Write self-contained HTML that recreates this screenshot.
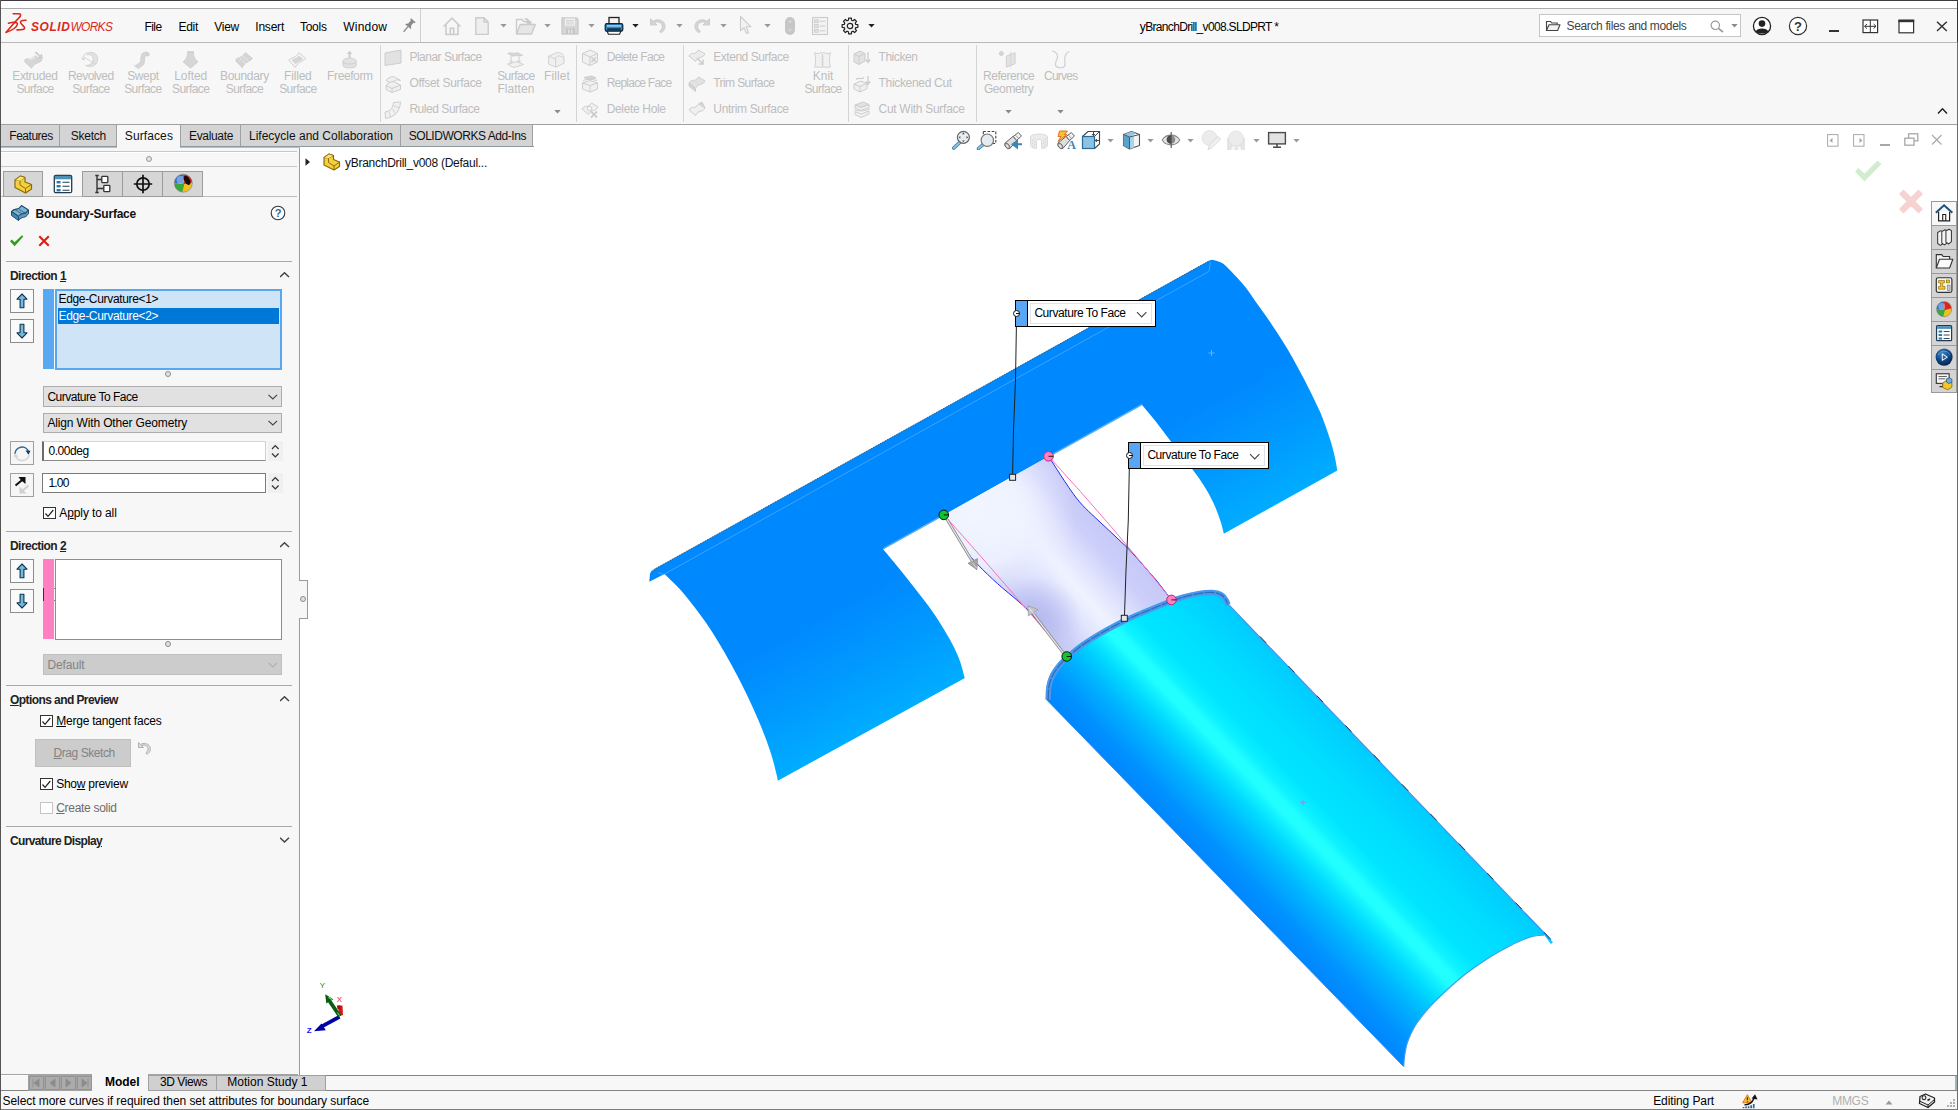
<!DOCTYPE html>
<html><head><meta charset="utf-8"><title>SOLIDWORKS</title>
<style>
html,body{margin:0;padding:0;}
body{width:1958px;height:1110px;position:relative;overflow:hidden;background:#fff;font-family:"Liberation Sans",sans-serif;font-size:12px;}
div,span.t,svg{position:absolute;}
span.t{white-space:nowrap;}
u{text-decoration:underline;text-underline-offset:1px;}
</style></head><body>
<div style="left:0px;top:0px;width:1958px;height:1110px;background:#fff;"></div>
<div style="left:0px;top:9px;width:1958px;height:33px;background:#f7f7f7;"></div>
<div style="left:0px;top:8px;width:1958px;height:1px;background:#ababab;"></div>
<div style="left:0px;top:42px;width:1958px;height:1px;background:#b9b9b9;"></div>
<div style="left:0px;top:43px;width:1958px;height:81px;background:#f7f7f7;"></div>
<div style="left:0px;top:124px;width:1958px;height:1px;background:#a0a0a0;"></div>
<span class="t" style="left:144.4px;top:18.6px;height:16px;line-height:16px;font-size:12px;color:#000;letter-spacing:-0.511px;">File</span>
<span class="t" style="left:178.4px;top:18.6px;height:16px;line-height:16px;font-size:12px;color:#000;letter-spacing:-0.268px;">Edit</span>
<span class="t" style="left:214.2px;top:18.6px;height:16px;line-height:16px;font-size:12px;color:#000;letter-spacing:-0.249px;">View</span>
<span class="t" style="left:255.3px;top:18.6px;height:16px;line-height:16px;font-size:12px;color:#000;letter-spacing:-0.217px;">Insert</span>
<span class="t" style="left:300.0px;top:18.6px;height:16px;line-height:16px;font-size:12px;color:#000;letter-spacing:-0.283px;">Tools</span>
<span class="t" style="left:343.3px;top:18.6px;height:16px;line-height:16px;font-size:12px;color:#000;letter-spacing:0.185px;">Window</span>
<div style="left:420px;top:9px;width:1px;height:33px;background:#d0d0d0;"></div>
<span class="t" style="left:1139.8px;top:18.6px;height:16px;line-height:16px;font-size:12px;color:#000;letter-spacing:-0.662px;">yBranchDrill_v008.SLDPRT *</span>
<span class="t" id="logo" style="left:31px;top:17.5px;height:18px;line-height:18px;font-size:12.5px;color:#da291c;font-style:italic;transform-origin:0 50%;transform:scaleX(0.953)"><b style="letter-spacing:0.65px">SOLID</b><span style="letter-spacing:-0.7px">WORKS</span></span>
<div style="left:1539px;top:14px;width:202px;height:23px;background:#fff;border:1px solid #c6c6c6;box-sizing:border-box;"></div>
<span class="t" style="left:1566.5px;top:18.1px;height:16px;line-height:16px;font-size:12px;color:#444;letter-spacing:-0.354px;">Search files and models</span>
<span class="t" style="left:12.2px;top:68.1px;height:16px;line-height:16px;font-size:12px;color:#bdbdbd;letter-spacing:-0.314px;">Extruded</span>
<span class="t" style="left:16.4px;top:81.4px;height:16px;line-height:16px;font-size:12px;color:#bdbdbd;letter-spacing:-0.578px;">Surface</span>
<span class="t" style="left:68.0px;top:68.1px;height:16px;line-height:16px;font-size:12px;color:#bdbdbd;letter-spacing:-0.566px;">Revolved</span>
<span class="t" style="left:72.2px;top:81.4px;height:16px;line-height:16px;font-size:12px;color:#bdbdbd;letter-spacing:-0.578px;">Surface</span>
<span class="t" style="left:127.2px;top:68.1px;height:16px;line-height:16px;font-size:12px;color:#bdbdbd;letter-spacing:-0.369px;">Swept</span>
<span class="t" style="left:124.2px;top:81.4px;height:16px;line-height:16px;font-size:12px;color:#bdbdbd;letter-spacing:-0.578px;">Surface</span>
<span class="t" style="left:174.2px;top:68.1px;height:16px;line-height:16px;font-size:12px;color:#bdbdbd;letter-spacing:-0.057px;">Lofted</span>
<span class="t" style="left:172.0px;top:81.4px;height:16px;line-height:16px;font-size:12px;color:#bdbdbd;letter-spacing:-0.578px;">Surface</span>
<span class="t" style="left:220.0px;top:68.1px;height:16px;line-height:16px;font-size:12px;color:#bdbdbd;letter-spacing:-0.295px;">Boundary</span>
<span class="t" style="left:225.8px;top:81.4px;height:16px;line-height:16px;font-size:12px;color:#bdbdbd;letter-spacing:-0.578px;">Surface</span>
<span class="t" style="left:284.1px;top:68.1px;height:16px;line-height:16px;font-size:12px;color:#bdbdbd;letter-spacing:-0.198px;">Filled</span>
<span class="t" style="left:279.2px;top:81.4px;height:16px;line-height:16px;font-size:12px;color:#bdbdbd;letter-spacing:-0.578px;">Surface</span>
<span class="t" style="left:327.1px;top:68.1px;height:16px;line-height:16px;font-size:12px;color:#bdbdbd;letter-spacing:-0.396px;">Freeform</span>
<span class="t" style="left:497.2px;top:68.1px;height:16px;line-height:16px;font-size:12px;color:#bdbdbd;letter-spacing:-0.578px;">Surface</span>
<span class="t" style="left:497.4px;top:81.4px;height:16px;line-height:16px;font-size:12px;color:#bdbdbd;letter-spacing:0.047px;">Flatten</span>
<span class="t" style="left:544.0px;top:68.1px;height:16px;line-height:16px;font-size:12px;color:#bdbdbd;letter-spacing:0.109px;">Fillet</span>
<span class="t" style="left:812.8px;top:68.1px;height:16px;line-height:16px;font-size:12px;color:#bdbdbd;letter-spacing:-0.043px;">Knit</span>
<span class="t" style="left:804.4px;top:81.4px;height:16px;line-height:16px;font-size:12px;color:#bdbdbd;letter-spacing:-0.578px;">Surface</span>
<span class="t" style="left:983.1px;top:68.1px;height:16px;line-height:16px;font-size:12px;color:#bdbdbd;letter-spacing:-0.484px;">Reference</span>
<span class="t" style="left:983.9px;top:81.4px;height:16px;line-height:16px;font-size:12px;color:#bdbdbd;letter-spacing:-0.396px;">Geometry</span>
<span class="t" style="left:1044.0px;top:68.1px;height:16px;line-height:16px;font-size:12px;color:#bdbdbd;letter-spacing:-0.753px;">Curves</span>
<span class="t" style="left:409.4px;top:49.1px;height:16px;line-height:16px;font-size:12px;color:#bdbdbd;letter-spacing:-0.504px;">Planar Surface</span>
<span class="t" style="left:409.4px;top:75.1px;height:16px;line-height:16px;font-size:12px;color:#bdbdbd;letter-spacing:-0.296px;">Offset Surface</span>
<span class="t" style="left:409.4px;top:101.1px;height:16px;line-height:16px;font-size:12px;color:#bdbdbd;letter-spacing:-0.456px;">Ruled Surface</span>
<span class="t" style="left:606.7px;top:49.1px;height:16px;line-height:16px;font-size:12px;color:#bdbdbd;letter-spacing:-0.644px;">Delete Face</span>
<span class="t" style="left:606.7px;top:75.1px;height:16px;line-height:16px;font-size:12px;color:#bdbdbd;letter-spacing:-0.778px;">Replace Face</span>
<span class="t" style="left:606.7px;top:101.1px;height:16px;line-height:16px;font-size:12px;color:#bdbdbd;letter-spacing:-0.337px;">Delete Hole</span>
<span class="t" style="left:713.3px;top:49.1px;height:16px;line-height:16px;font-size:12px;color:#bdbdbd;letter-spacing:-0.473px;">Extend Surface</span>
<span class="t" style="left:713.3px;top:75.1px;height:16px;line-height:16px;font-size:12px;color:#bdbdbd;letter-spacing:-0.595px;">Trim Surface</span>
<span class="t" style="left:713.3px;top:101.1px;height:16px;line-height:16px;font-size:12px;color:#bdbdbd;letter-spacing:-0.330px;">Untrim Surface</span>
<span class="t" style="left:878.5px;top:49.1px;height:16px;line-height:16px;font-size:12px;color:#bdbdbd;letter-spacing:-0.445px;">Thicken</span>
<span class="t" style="left:878.5px;top:75.1px;height:16px;line-height:16px;font-size:12px;color:#bdbdbd;letter-spacing:-0.312px;">Thickened Cut</span>
<span class="t" style="left:878.5px;top:101.1px;height:16px;line-height:16px;font-size:12px;color:#bdbdbd;letter-spacing:-0.286px;">Cut With Surface</span>
<div style="left:379.5px;top:45px;width:1px;height:77px;background:#d4d4d4;"></div>
<div style="left:576.3px;top:45px;width:1px;height:77px;background:#d4d4d4;"></div>
<div style="left:683.4px;top:45px;width:1px;height:77px;background:#d4d4d4;"></div>
<div style="left:848.4px;top:45px;width:1px;height:77px;background:#d4d4d4;"></div>
<div style="left:976.4px;top:45px;width:1px;height:77px;background:#d4d4d4;"></div>
<div style="left:0px;top:125px;width:533px;height:22px;background:#d4d4d4;"></div>
<div style="left:0px;top:124px;width:60px;height:23px;background:#d4d4d4;border:1px solid #a0a0a0;box-sizing:border-box;"></div>
<div style="left:59px;top:124px;width:58px;height:23px;background:#d4d4d4;border:1px solid #a0a0a0;box-sizing:border-box;"></div>
<div style="left:180px;top:124px;width:61px;height:23px;background:#d4d4d4;border:1px solid #a0a0a0;box-sizing:border-box;"></div>
<div style="left:240px;top:124px;width:161px;height:23px;background:#d4d4d4;border:1px solid #a0a0a0;box-sizing:border-box;"></div>
<div style="left:400px;top:124px;width:133px;height:23px;background:#d4d4d4;border:1px solid #a0a0a0;box-sizing:border-box;"></div>
<div style="left:0px;top:146px;width:534px;height:1px;background:#8c9aa0;"></div>
<div style="left:0px;top:147px;width:300px;height:1px;background:#b4c0c4;"></div>
<div style="left:117px;top:125px;width:63px;height:23px;background:#f7f7f7;"></div>
<span class="t" style="left:9.3px;top:128.1px;height:16px;line-height:16px;font-size:12px;color:#111;letter-spacing:-0.480px;">Features</span>
<span class="t" style="left:70.8px;top:128.1px;height:16px;line-height:16px;font-size:12px;color:#111;letter-spacing:-0.245px;">Sketch</span>
<span class="t" style="left:124.8px;top:128.1px;height:16px;line-height:16px;font-size:12px;color:#111;letter-spacing:0.107px;">Surfaces</span>
<span class="t" style="left:189.0px;top:128.1px;height:16px;line-height:16px;font-size:12px;color:#111;letter-spacing:-0.336px;">Evaluate</span>
<span class="t" style="left:249.0px;top:128.1px;height:16px;line-height:16px;font-size:12px;color:#111;letter-spacing:-0.003px;">Lifecycle and Collaboration</span>
<span class="t" style="left:408.7px;top:128.1px;height:16px;line-height:16px;font-size:12px;color:#111;letter-spacing:-0.447px;">SOLIDWORKS Add-Ins</span>
<div style="left:0px;top:148px;width:300px;height:926px;background:#f7f7f7;"></div>
<div style="left:299px;top:148px;width:1px;height:927px;background:#9a9a9a;"></div>
<div style="left:1px;top:151px;width:296px;height:1px;background:#c8c8c8;"></div>
<div style="left:1px;top:152px;width:296px;height:1px;background:#fff;"></div>
<div style="left:1px;top:166px;width:296px;height:1px;background:#c8c8c8;"></div>
<div style="left:145.7px;top:155.8px;width:6px;height:6px;border-radius:50%;border:1px solid #999;background:#e4e4e4;box-sizing:border-box"></div>
<div style="left:1px;top:196px;width:296px;height:1px;background:#bdbdbd;"></div>
<div style="left:3px;top:171px;width:40.0px;height:26px;background:#d6d6d6;border:1px solid #9c9c9c;box-sizing:border-box;"></div>
<div style="left:82.4px;top:171px;width:40.8px;height:26px;background:#d6d6d6;border:1px solid #9c9c9c;box-sizing:border-box;"></div>
<div style="left:122.2px;top:171px;width:40.8px;height:26px;background:#d6d6d6;border:1px solid #9c9c9c;box-sizing:border-box;"></div>
<div style="left:162px;top:171px;width:40.80000000000001px;height:26px;background:#d6d6d6;border:1px solid #9c9c9c;box-sizing:border-box;"></div>
<span class="t" style="left:35.6px;top:205.6px;height:16px;line-height:16px;font-size:12px;color:#111;letter-spacing:-0.226px;font-weight:bold;">Boundary-Surface</span>
<div style="left:6px;top:261px;width:286px;height:1px;background:#a8a8a8;"></div>
<span class="t" style="left:10.0px;top:267.6px;height:16px;line-height:16px;font-size:12px;color:#222;letter-spacing:-0.545px;font-weight:bold;">Direction <u>1</u></span>
<svg style="left:279.5px;top:272.0px" width="10" height="7"><path d="M0 5 L4.5 0.8 L9 5" fill="none" stroke="#444" stroke-width="1.5"/></svg>
<div style="left:10px;top:289px;width:24px;height:24px;background:#fafafa;border:1px solid #8c8c8c;box-sizing:border-box;"></div>
<svg style="left:15px;top:293px" width="14" height="16"><path d="M7 1 L12 6.2 H8.9 V14.8 H5.1 V6.2 H2 Z" fill="#76b9de" stroke="#0d3550" stroke-width="1.1" stroke-linejoin="round"/></svg>
<div style="left:10px;top:319px;width:24px;height:24px;background:#fafafa;border:1px solid #8c8c8c;box-sizing:border-box;"></div>
<svg style="left:15px;top:323px" width="14" height="16"><path d="M7 15 L12 9.8 H8.9 V1.2 H5.1 V9.8 H2 Z" fill="#76b9de" stroke="#0d3550" stroke-width="1.1" stroke-linejoin="round"/></svg>
<div style="left:43px;top:289px;width:11px;height:80px;background:#58a9f2;"></div>
<div style="left:55px;top:289px;width:227px;height:80.5px;background:#cfe4f7;border:2px solid #57a8ee;box-sizing:border-box;"></div>
<span class="t" style="left:58.5px;top:291.1px;height:16px;line-height:16px;font-size:12px;color:#000;letter-spacing:-0.330px;">Edge-Curvature&lt;1&gt;</span>
<div style="left:58px;top:308px;width:221px;height:15.5px;background:#0078d7;"></div>
<span class="t" style="left:58.5px;top:307.6px;height:16px;line-height:16px;font-size:12px;color:#fff;letter-spacing:-0.330px;">Edge-Curvature&lt;2&gt;</span>
<div style="left:164.7px;top:371px;width:6px;height:6px;border-radius:50%;border:1px solid #8a8a8a;background:#e2e2e2;box-sizing:border-box"></div>
<div style="left:43px;top:386px;width:239px;height:20.5px;background:#e1e1e1;border:1px solid #adadad;box-sizing:border-box;"></div>
<span class="t" style="left:47.4px;top:389.1px;height:16px;line-height:16px;font-size:12px;color:#000;letter-spacing:-0.481px;">Curvature To Face</span>
<svg style="left:268px;top:393.5px" width="10" height="7"><path d="M0.5 0.8 L4.8 5 L9.1 0.8" fill="none" stroke="#444" stroke-width="1.1"/></svg>
<div style="left:43px;top:412.6px;width:239px;height:20.5px;background:#e1e1e1;border:1px solid #adadad;box-sizing:border-box;"></div>
<span class="t" style="left:47.4px;top:415.1px;height:16px;line-height:16px;font-size:12px;color:#000;letter-spacing:-0.146px;">Align With Other Geometry</span>
<svg style="left:268px;top:420.1px" width="10" height="7"><path d="M0.5 0.8 L4.8 5 L9.1 0.8" fill="none" stroke="#444" stroke-width="1.1"/></svg>
<div style="left:10px;top:441px;width:24px;height:24px;background:#f6f6f6;border:1px solid #a0a0a0;box-sizing:border-box;"></div>
<div style="left:42px;top:441px;width:224px;height:19.5px;background:#fff;border-left:2px solid #6c6c6c;border-top:1px solid #d4d4d4;border-right:1px solid #cfcfcf;border-bottom:1px solid #8a8a8a;box-sizing:border-box;"></div>
<span class="t" style="left:48.4px;top:443.3px;height:16px;line-height:16px;font-size:12px;color:#000;letter-spacing:-0.423px;">0.00deg</span>
<div style="left:267.5px;top:441px;width:15.5px;height:19.5px;background:#f0f0f0;"></div>
<svg style="left:270.5px;top:444px" width="9" height="15"><path d="M1 5 L4.3 1.5 L7.6 5 M1 9.5 L4.3 13 L7.6 9.5" fill="none" stroke="#333" stroke-width="1.2"/></svg>
<div style="left:10px;top:473px;width:24px;height:24px;background:#f6f6f6;border:1px solid #a0a0a0;box-sizing:border-box;"></div>
<div style="left:42px;top:473px;width:224px;height:19.5px;background:#fff;border:1px solid #7a7a7a;box-sizing:border-box;"></div>
<span class="t" style="left:48.4px;top:475.3px;height:16px;line-height:16px;font-size:12px;color:#000;letter-spacing:-0.786px;">1.00</span>
<div style="left:267.5px;top:473px;width:15.5px;height:19.5px;background:#f0f0f0;"></div>
<svg style="left:270.5px;top:476px" width="9" height="15"><path d="M1 5 L4.3 1.5 L7.6 5 M1 9.5 L4.3 13 L7.6 9.5" fill="none" stroke="#333" stroke-width="1.2"/></svg>
<div style="left:43.4px;top:506.7px;width:12.5px;height:12.5px;background:#fff;border:1px solid #333;box-sizing:border-box;"></div>
<svg style="left:43.4px;top:506.7px" width="13" height="13"><path d="M2.5 6.5 L5 9.3 L10.3 3" fill="none" stroke="#222" stroke-width="1.2"/></svg>
<span class="t" style="left:59.3px;top:505.1px;height:16px;line-height:16px;font-size:12px;color:#000;letter-spacing:-0.107px;">A<u>p</u>ply to all</span>
<div style="left:6px;top:531px;width:286px;height:1px;background:#a8a8a8;"></div>
<span class="t" style="left:10.0px;top:537.6px;height:16px;line-height:16px;font-size:12px;color:#222;letter-spacing:-0.545px;font-weight:bold;">Direction <u>2</u></span>
<svg style="left:279.5px;top:542.0px" width="10" height="7"><path d="M0 5 L4.5 0.8 L9 5" fill="none" stroke="#444" stroke-width="1.5"/></svg>
<div style="left:10px;top:559px;width:24px;height:24px;background:#fafafa;border:1px solid #8c8c8c;box-sizing:border-box;"></div>
<svg style="left:15px;top:563px" width="14" height="16"><path d="M7 1 L12 6.2 H8.9 V14.8 H5.1 V6.2 H2 Z" fill="#76b9de" stroke="#0d3550" stroke-width="1.1" stroke-linejoin="round"/></svg>
<div style="left:10px;top:589px;width:24px;height:24px;background:#fafafa;border:1px solid #8c8c8c;box-sizing:border-box;"></div>
<svg style="left:15px;top:593px" width="14" height="16"><path d="M7 15 L12 9.8 H8.9 V1.2 H5.1 V9.8 H2 Z" fill="#76b9de" stroke="#0d3550" stroke-width="1.1" stroke-linejoin="round"/></svg>
<div style="left:43px;top:559px;width:11px;height:80px;background:#ff80c0;"></div>
<div style="left:55px;top:559px;width:227px;height:81px;background:#fff;border:1px solid #7f8fa9;box-sizing:border-box;"></div>
<div style="left:43px;top:588px;width:1px;height:13px;background:#333;"></div>
<div style="left:54px;top:588px;width:2px;height:1px;background:#888;"></div>
<div style="left:54px;top:600px;width:2px;height:1px;background:#888;"></div>
<div style="left:164.7px;top:641px;width:6px;height:6px;border-radius:50%;border:1px solid #8a8a8a;background:#e2e2e2;box-sizing:border-box"></div>
<div style="left:43px;top:654.2px;width:239px;height:20.5px;background:#cccccc;border:1px solid #bfbfbf;box-sizing:border-box;"></div>
<span class="t" style="left:47.4px;top:656.8px;height:16px;line-height:16px;font-size:12px;color:#838383;letter-spacing:-0.131px;">Default</span>
<svg style="left:268px;top:661.7px" width="10" height="7"><path d="M0.5 0.8 L4.8 5 L9.1 0.8" fill="none" stroke="#b0b0b0" stroke-width="1.1"/></svg>
<div style="left:6px;top:685px;width:286px;height:1px;background:#a8a8a8;"></div>
<span class="t" style="left:10.0px;top:691.6px;height:16px;line-height:16px;font-size:12px;color:#222;letter-spacing:-0.576px;font-weight:bold;"><u>O</u>ptions and Preview</span>
<svg style="left:279.5px;top:696.0px" width="10" height="7"><path d="M0 5 L4.5 0.8 L9 5" fill="none" stroke="#444" stroke-width="1.5"/></svg>
<div style="left:40.3px;top:714.5px;width:12.5px;height:12.5px;background:#fff;border:1px solid #333;box-sizing:border-box;"></div>
<svg style="left:40.3px;top:714.5px" width="13" height="13"><path d="M2.5 6.5 L5 9.3 L10.3 3" fill="none" stroke="#222" stroke-width="1.2"/></svg>
<span class="t" style="left:56.2px;top:712.9px;height:16px;line-height:16px;font-size:12px;color:#000;letter-spacing:-0.219px;"><u>M</u>erge tangent faces</span>
<div style="left:35.3px;top:738.5px;width:95.5px;height:28px;background:#cccccc;border:1px solid #c0c0c0;box-sizing:border-box;"></div>
<span class="t" style="left:53.5px;top:745.1px;height:16px;line-height:16px;font-size:12px;color:#838383;letter-spacing:-0.438px;"><u>D</u>rag Sketch</span>
<div style="left:40.3px;top:777.5px;width:12.5px;height:12.5px;background:#fff;border:1px solid #333;box-sizing:border-box;"></div>
<svg style="left:40.3px;top:777.5px" width="13" height="13"><path d="M2.5 6.5 L5 9.3 L10.3 3" fill="none" stroke="#222" stroke-width="1.2"/></svg>
<span class="t" style="left:56.2px;top:775.9px;height:16px;line-height:16px;font-size:12px;color:#000;letter-spacing:-0.259px;">Sho<u>w</u> preview</span>
<div style="left:40.3px;top:801.5px;width:12.5px;height:12.5px;background:#fff;border:1px solid #c4c4c4;box-sizing:border-box;"></div>
<span class="t" style="left:56.2px;top:799.9px;height:16px;line-height:16px;font-size:12px;color:#6d6d6d;letter-spacing:-0.294px;"><u>C</u>reate solid</span>
<div style="left:6px;top:826px;width:286px;height:1px;background:#a8a8a8;"></div>
<span class="t" style="left:10.0px;top:832.6px;height:16px;line-height:16px;font-size:12px;color:#222;letter-spacing:-0.629px;font-weight:bold;">Curvature Displa<u>y</u></span>
<svg style="left:279.5px;top:837.0px" width="10" height="7"><path d="M0 0.8 L4.5 5 L9 0.8" fill="none" stroke="#444" stroke-width="1.5"/></svg>
<div style="left:299px;top:580px;width:9px;height:39px;background:#f7f7f7;border:1px solid #9a9a9a;box-sizing:border-box;border-left:none;"></div>
<div style="left:300px;top:596px;width:6px;height:6px;border-radius:50%;border:1px solid #8a8a8a;background:#e2e2e2;box-sizing:border-box"></div>
<div style="left:0px;top:1074px;width:298px;height:1px;background:#a4a4a4;"></div>
<div style="left:300px;top:1075px;width:1658px;height:1px;background:#848484;"></div>
<div style="left:0px;top:1076px;width:1958px;height:14px;background:#f7f7f7;"></div>
<div style="left:0px;top:1090px;width:1958px;height:1px;background:#848484;"></div>
<div style="left:0px;top:1091px;width:1958px;height:19px;background:#f7f7f7;"></div>
<div style="left:0px;top:1109px;width:1958px;height:1px;background:#7c7c7c;"></div>
<div style="left:1955px;top:1076px;width:2px;height:14px;background:#9ab4b8;"></div>
<div style="left:28px;top:1075px;width:64.5px;height:16px;background:#a2a2a2;"></div>
<div style="left:29px;top:1076px;width:15px;height:14px;background:#ababab;border:1px solid #949494;box-sizing:border-box;"></div>
<div style="left:45px;top:1076px;width:15px;height:14px;background:#ababab;border:1px solid #949494;box-sizing:border-box;"></div>
<div style="left:61px;top:1076px;width:15px;height:14px;background:#ababab;border:1px solid #949494;box-sizing:border-box;"></div>
<div style="left:77px;top:1076px;width:15px;height:14px;background:#ababab;border:1px solid #949494;box-sizing:border-box;"></div>
<div style="left:92.4px;top:1074px;width:57px;height:17px;background:#f7f7f7;border-right:1px solid #a0a0a0;box-sizing:border-box"></div>
<span class="t" style="left:105.0px;top:1074.1px;height:16px;line-height:16px;font-size:12px;color:#000;letter-spacing:-0.031px;font-weight:bold;">Model</span>
<div style="left:149.4px;top:1075px;width:68px;height:16px;background:#d0d0d0;border:1px solid #a0a0a0;box-sizing:border-box;border-left:none"></div>
<span class="t" style="left:160.0px;top:1074.1px;height:16px;line-height:16px;font-size:12px;color:#000;letter-spacing:-0.434px;">3D Views</span>
<div style="left:217.4px;top:1075px;width:108.4px;height:16px;background:#d0d0d0;border:1px solid #a0a0a0;box-sizing:border-box;border-left:none"></div>
<span class="t" style="left:227.3px;top:1074.1px;height:16px;line-height:16px;font-size:12px;color:#000;letter-spacing:0.013px;">Motion Study 1</span>
<span class="t" style="left:2.5px;top:1093.1px;height:16px;line-height:16px;font-size:12px;color:#000;letter-spacing:-0.069px;">Select more curves if required then set attributes for boundary surface</span>
<span class="t" style="left:1653.2px;top:1093.1px;height:16px;line-height:16px;font-size:12px;color:#000;letter-spacing:-0.101px;">Editing Part</span>
<span class="t" style="left:1832.2px;top:1093.1px;height:16px;line-height:16px;font-size:12px;color:#b0b0b0;letter-spacing:-0.282px;">MMGS</span>
<span class="t" style="left:345.0px;top:154.6px;height:16px;line-height:16px;font-size:12px;color:#111;letter-spacing:-0.264px;">yBranchDrill_v008 (Defaul...</span>
<div style="left:0px;top:0px;width:1958px;height:1px;background:#3c3c3c;"></div>
<div style="left:0px;top:0px;width:1px;height:1110px;background:#555;"></div>
<div style="left:1957px;top:42px;width:1px;height:1068px;background:#6e6e6e;"></div>
<div style="left:1957px;top:0px;width:1px;height:42px;background:#333;"></div>
<svg style="left:0;top:0" width="1958" height="1110" viewBox="0 0 1958 1110">
<defs>
<linearGradient id="gT" gradientUnits="userSpaceOnUse" x1="932" y1="415" x2="1049" y2="627">
<stop offset="0" stop-color="#0088fe"/><stop offset="0.5" stop-color="#0088fe"/><stop offset="0.8" stop-color="#009cff"/><stop offset="1" stop-color="#00acff"/></linearGradient>
<linearGradient id="gC" gradientUnits="userSpaceOnUse" x1="1046" y1="699" x2="1186.9" y2="562">
<stop offset="0" stop-color="#0086ff"/><stop offset="0.1" stop-color="#0092ff"/><stop offset="0.24" stop-color="#00b4ff"/><stop offset="0.35" stop-color="#00d8ff"/><stop offset="0.425" stop-color="#12f2ff"/><stop offset="0.46" stop-color="#22ffff"/><stop offset="0.5" stop-color="#22ffff"/><stop offset="0.545" stop-color="#0ef2ff"/><stop offset="0.62" stop-color="#00e6ff"/><stop offset="0.8" stop-color="#00dcff"/><stop offset="1" stop-color="#00ccff"/></linearGradient>
<linearGradient id="gP" gradientUnits="userSpaceOnUse" x1="1005" y1="585" x2="1093.6" y2="508.2">
<stop offset="0" stop-color="#c6caf5"/><stop offset="0.1" stop-color="#cdd1f7"/><stop offset="0.3" stop-color="#e2e6fe"/><stop offset="0.45" stop-color="#eff3ff"/><stop offset="0.62" stop-color="#e0e3fd"/><stop offset="0.8" stop-color="#cccff9"/><stop offset="1" stop-color="#c6c8f7"/></linearGradient>
<radialGradient id="gP2" gradientUnits="userSpaceOnUse" cx="975" cy="515" r="100">
<stop offset="0" stop-color="#f2f6ff" stop-opacity="1"/><stop offset="0.5" stop-color="#eff3ff" stop-opacity="0.9"/><stop offset="1" stop-color="#e8ecff" stop-opacity="0"/></radialGradient>
<radialGradient id="gP3" gradientUnits="userSpaceOnUse" cx="1036" cy="622" r="46">
<stop offset="0" stop-color="#b2b6ec" stop-opacity="0.95"/><stop offset="0.5" stop-color="#b8bcf0" stop-opacity="0.6"/><stop offset="1" stop-color="#c0c4f4" stop-opacity="0"/></radialGradient>
</defs>
<path d="M654.1 569.3 L1209 260.8 Q1211.5 259.3 1213.5 259.9 C1215.1 260.5 1219.9 261.4 1223.3 263.8 C1226.7 266.2 1230.5 270.8 1234.1 274.6 C1237.7 278.4 1241.3 282.0 1244.9 286.5 C1248.5 291.0 1252.1 296.6 1255.7 301.7 C1259.3 306.8 1262.9 311.6 1266.5 316.8 C1270.1 322.0 1273.8 327.4 1277.4 333.0 C1281.0 338.6 1284.6 344.2 1288.2 350.3 C1291.8 356.4 1295.4 363.1 1299.0 369.8 C1302.6 376.5 1306.2 383.2 1309.8 390.4 C1313.4 397.6 1317.3 405.4 1320.6 413.1 C1323.8 420.9 1326.9 429.7 1329.3 436.9 C1331.7 444.1 1333.4 450.8 1334.7 456.4 C1336.0 462.0 1336.9 468.1 1337.3 470.4 L1223.8 533.7 C1223.3 531.9 1222.4 527.1 1220.9 522.6 C1219.5 518.1 1217.3 511.8 1215.1 506.7 C1212.9 501.6 1210.3 496.6 1207.9 492.3 C1205.5 488.0 1203.1 484.4 1200.7 480.8 C1198.3 477.2 1196.8 475.1 1193.5 470.7 C1190.2 466.3 1185.1 459.8 1181.0 454.5 C1176.9 449.2 1173.2 444.5 1169.0 439.0 C1164.8 433.5 1160.6 427.5 1156.0 421.7 C1151.4 415.9 1144.0 407.3 1141.6 404.4 L883 549.1 C885.5 552.2 893.2 561.2 898.3 567.5 C903.4 573.8 908.5 580.2 913.6 586.7 C918.7 593.2 924.3 600.2 928.9 606.6 C933.5 613.0 937.4 618.9 941.2 625.0 C945.0 631.1 948.8 637.4 951.9 643.3 C955.0 649.2 957.6 654.8 959.6 660.2 C961.6 665.6 963.3 672.5 964.1 675.5 C964.9 678.5 964.4 677.8 964.5 678.3 L777.8 780.7 C777.6 779.8 777.7 779.1 776.8 775.5 C775.9 771.9 774.3 764.9 772.6 759.0 C770.9 753.1 768.8 746.9 766.4 740.3 C764.0 733.7 761.2 726.9 758.1 719.6 C755.0 712.4 751.4 704.4 747.8 696.8 C744.2 689.2 740.2 681.2 736.4 674.0 C732.6 666.8 729.0 660.2 725.0 653.3 C721.0 646.4 717.0 639.4 712.5 632.5 C708.0 625.6 703.2 618.7 698.0 611.8 C692.8 604.9 687.1 597.4 681.5 591.1 C675.9 584.8 667.3 576.9 664.5 574.1 L649.3 581.8 L650 573.5 Q651 570.5 654.1 569.3 Z" fill="url(#gT)"/>
<path d="M658 572.6 L664 574.3 L1209 271.3 L1210.5 262" fill="none" stroke="#5ab0ff" stroke-width="0.8" opacity="0.85"/>
<path d="M654.5 569.1 L1209 260.9" fill="none" stroke="#20303c" stroke-width="1" stroke-dasharray="1 1" opacity="0.75"/>
<path d="M883.4 548.6 L943 515.4 M1049 456.4 L1141.4 404.9" fill="none" stroke="#55acff" stroke-width="1.6"/>
<path d="M944 515 L1048.6 456.4 C1053.2 463.3 1067.7 486.9 1076.4 498.0 C1085.1 509.1 1092.6 514.8 1101.0 523.0 C1109.4 531.2 1118.6 538.9 1126.8 547.2 C1135.0 555.5 1145.0 567.3 1150.0 573.0 C1155.0 578.7 1153.5 576.7 1157.1 581.2 C1160.7 585.7 1169.1 596.9 1171.5 600.0 L1171.5 598.5 C1170.4 598.9 1169.7 598.9 1165.0 600.8 C1160.3 602.6 1150.2 606.8 1143.5 609.6 C1136.8 612.4 1131.8 614.3 1124.6 617.8 C1117.4 621.3 1108.0 626.2 1100.6 630.4 C1093.2 634.6 1086.1 639.1 1080.4 643.1 C1074.7 647.1 1068.9 652.5 1066.6 654.4 C1065.3 654.8 1061.6 650.9 1058.0 646.5 C1054.4 642.1 1050.0 636.0 1045.0 630.0 C1040.0 624.0 1032.6 615.1 1028.1 610.3 C1023.6 605.5 1023.2 605.6 1018.1 601.1 C1013.0 596.6 1004.0 589.5 997.4 583.5 C990.8 577.5 983.7 570.8 978.3 565.1 C972.9 559.4 969.2 555.4 965.0 549.5 C960.8 543.6 956.5 535.8 953.0 530.0 C949.5 524.2 945.5 517.5 944.0 515.0 Z" fill="url(#gP)"/>
<path d="M944 515 L1048.6 456.4 C1053.2 463.3 1067.7 486.9 1076.4 498.0 C1085.1 509.1 1092.6 514.8 1101.0 523.0 C1109.4 531.2 1118.6 538.9 1126.8 547.2 C1135.0 555.5 1145.0 567.3 1150.0 573.0 C1155.0 578.7 1153.5 576.7 1157.1 581.2 C1160.7 585.7 1169.1 596.9 1171.5 600.0 L1171.5 598.5 C1170.4 598.9 1169.7 598.9 1165.0 600.8 C1160.3 602.6 1150.2 606.8 1143.5 609.6 C1136.8 612.4 1131.8 614.3 1124.6 617.8 C1117.4 621.3 1108.0 626.2 1100.6 630.4 C1093.2 634.6 1086.1 639.1 1080.4 643.1 C1074.7 647.1 1068.9 652.5 1066.6 654.4 C1065.3 654.8 1061.6 650.9 1058.0 646.5 C1054.4 642.1 1050.0 636.0 1045.0 630.0 C1040.0 624.0 1032.6 615.1 1028.1 610.3 C1023.6 605.5 1023.2 605.6 1018.1 601.1 C1013.0 596.6 1004.0 589.5 997.4 583.5 C990.8 577.5 983.7 570.8 978.3 565.1 C972.9 559.4 969.2 555.4 965.0 549.5 C960.8 543.6 956.5 535.8 953.0 530.0 C949.5 524.2 945.5 517.5 944.0 515.0 Z" fill="url(#gP2)"/>
<path d="M944 515 L1048.6 456.4 C1053.2 463.3 1067.7 486.9 1076.4 498.0 C1085.1 509.1 1092.6 514.8 1101.0 523.0 C1109.4 531.2 1118.6 538.9 1126.8 547.2 C1135.0 555.5 1145.0 567.3 1150.0 573.0 C1155.0 578.7 1153.5 576.7 1157.1 581.2 C1160.7 585.7 1169.1 596.9 1171.5 600.0 L1171.5 598.5 C1170.4 598.9 1169.7 598.9 1165.0 600.8 C1160.3 602.6 1150.2 606.8 1143.5 609.6 C1136.8 612.4 1131.8 614.3 1124.6 617.8 C1117.4 621.3 1108.0 626.2 1100.6 630.4 C1093.2 634.6 1086.1 639.1 1080.4 643.1 C1074.7 647.1 1068.9 652.5 1066.6 654.4 C1065.3 654.8 1061.6 650.9 1058.0 646.5 C1054.4 642.1 1050.0 636.0 1045.0 630.0 C1040.0 624.0 1032.6 615.1 1028.1 610.3 C1023.6 605.5 1023.2 605.6 1018.1 601.1 C1013.0 596.6 1004.0 589.5 997.4 583.5 C990.8 577.5 983.7 570.8 978.3 565.1 C972.9 559.4 969.2 555.4 965.0 549.5 C960.8 543.6 956.5 535.8 953.0 530.0 C949.5 524.2 945.5 517.5 944.0 515.0 Z" fill="url(#gP3)"/>
<path d="M944 515 C945.5 517.5 949.5 524.2 953.0 530.0 C956.5 535.8 960.8 543.6 965.0 549.5 C969.2 555.4 972.9 559.4 978.3 565.1 C983.7 570.8 990.8 577.5 997.4 583.5 C1004.0 589.5 1013.0 596.6 1018.1 601.1 C1023.2 605.6 1023.6 605.5 1028.1 610.3 C1032.6 615.1 1040.0 624.0 1045.0 630.0 C1050.0 636.0 1054.4 642.1 1058.0 646.5 C1061.6 650.9 1065.3 654.8 1066.8 656.4 " fill="none" stroke="#2a2ae0" stroke-width="1"/>
<path d="M1048.6 456.4 C1053.2 463.3 1067.7 486.9 1076.4 498.0 C1085.1 509.1 1092.6 514.8 1101.0 523.0 C1109.4 531.2 1118.6 538.9 1126.8 547.2 C1135.0 555.5 1145.0 567.3 1150.0 573.0 C1155.0 578.7 1153.5 576.7 1157.1 581.2 C1160.7 585.7 1169.1 596.9 1171.5 600.0 " fill="none" stroke="#2a2ae0" stroke-width="1"/>
<path d="M944 515 Q997 574 1066.8 656.4" fill="none" stroke="#ff70b8" stroke-width="1"/>
<path d="M1048.6 456.4 Q1112 525 1171.5 600" fill="none" stroke="#ff70b8" stroke-width="1"/>
<path d="M1045.8 699.2 C1046.0 696.8 1046.2 689.0 1047.0 684.7 C1047.8 680.4 1049.0 676.9 1050.8 673.3 C1052.6 669.7 1055.1 666.4 1057.7 663.2 C1060.3 660.1 1062.8 657.8 1066.6 654.4 C1070.4 651.0 1074.7 647.1 1080.4 643.1 C1086.1 639.1 1093.2 634.6 1100.6 630.4 C1108.0 626.2 1117.4 621.3 1124.6 617.8 C1131.8 614.3 1136.8 612.4 1143.5 609.6 C1150.2 606.8 1158.7 603.2 1165.0 600.8 C1171.3 598.4 1175.8 596.7 1181.3 595.1 C1186.8 593.5 1192.8 592.2 1197.7 591.4 C1202.6 590.6 1206.8 590.3 1210.4 590.5 C1214.0 590.7 1216.9 591.3 1219.2 592.6 C1221.5 593.9 1223.1 596.6 1224.2 598.3 C1225.3 600.0 1225.8 602.0 1226.1 602.7 L1553 942.2 L1550.8 944 L1544.3 935.1 C1542.1 935.4 1537.1 934.8 1531.3 936.6 C1525.5 938.4 1516.9 942.3 1509.7 945.9 C1502.5 949.5 1495.3 953.6 1488.1 958.2 C1480.9 962.8 1473.7 967.7 1466.5 973.3 C1459.3 978.9 1451.3 986.0 1444.8 992.0 C1438.3 998.0 1432.6 1003.5 1427.6 1009.3 C1422.6 1015.1 1418.0 1021.1 1414.6 1026.6 C1411.2 1032.1 1409.1 1037.5 1407.4 1042.5 C1405.7 1047.5 1405.1 1052.9 1404.5 1056.9 C1403.9 1060.9 1403.9 1065.1 1403.8 1066.7 Z" fill="url(#gC)"/>
<path d="M1048.2 699.7 C1048.3 697.5 1048.2 690.8 1048.9 686.7 C1049.7 682.6 1050.9 678.9 1052.7 675.3 C1054.5 671.7 1057.0 668.4 1059.6 665.2 C1062.2 662.1 1064.7 659.8 1068.5 656.4 C1072.3 653.0 1076.6 649.1 1082.3 645.1 C1088.0 641.1 1095.1 636.6 1102.5 632.4 C1109.9 628.2 1119.3 623.3 1126.5 619.8 C1133.7 616.3 1138.7 614.4 1145.4 611.6 C1152.1 608.8 1160.6 605.2 1166.9 602.8 C1173.2 600.4 1177.8 598.7 1183.2 597.1 C1188.7 595.5 1194.8 594.2 1199.6 593.4 C1204.5 592.6 1208.7 592.3 1212.3 592.5 C1215.9 592.7 1218.8 593.3 1221.1 594.6 C1223.4 595.9 1225.0 598.6 1226.1 600.3 C1227.2 602.0 1227.7 604.0 1228.0 604.7 " fill="none" stroke="#4b98ee" stroke-width="5.4"/>
<path d="M1048.2 699.7 C1048.3 697.5 1048.2 690.8 1048.9 686.7 C1049.7 682.6 1050.9 678.9 1052.7 675.3 C1054.5 671.7 1057.0 668.4 1059.6 665.2 C1062.2 662.1 1064.7 659.8 1068.5 656.4 C1072.3 653.0 1076.6 649.1 1082.3 645.1 C1088.0 641.1 1095.1 636.6 1102.5 632.4 C1109.9 628.2 1119.3 623.3 1126.5 619.8 C1133.7 616.3 1138.7 614.4 1145.4 611.6 C1152.1 608.8 1160.6 605.2 1166.9 602.8 C1173.2 600.4 1177.8 598.7 1183.2 597.1 C1188.7 595.5 1194.8 594.2 1199.6 593.4 C1204.5 592.6 1208.7 592.3 1212.3 592.5 C1215.9 592.7 1218.8 593.3 1221.1 594.6 C1223.4 595.9 1225.0 598.6 1226.1 600.3 C1227.2 602.0 1227.7 604.0 1228.0 604.7 " fill="none" stroke="#2f6eb6" stroke-width="1.3" stroke-dasharray="10 1.2"/>
<path d="M1227 603 L1551 940" fill="none" stroke="#3a8ee8" stroke-width="1.2"/>
<path d="M1260 636.5 L1551.5 940" fill="none" stroke="#0a2030" stroke-width="1" stroke-dasharray="9 32" opacity="0.8"/>
<path d="M1544.3 935.1 C1542.1 935.4 1537.1 934.8 1531.3 936.6 C1525.5 938.4 1516.9 942.3 1509.7 945.9 C1502.5 949.5 1495.3 953.6 1488.1 958.2 C1480.9 962.8 1473.7 967.7 1466.5 973.3 C1459.3 978.9 1451.3 986.0 1444.8 992.0 C1438.3 998.0 1432.6 1003.5 1427.6 1009.3 C1422.6 1015.1 1418.0 1021.1 1414.6 1026.6 C1411.2 1032.1 1409.1 1037.5 1407.4 1042.5 C1405.7 1047.5 1405.1 1052.9 1404.5 1056.9 C1403.9 1060.9 1403.9 1065.1 1403.8 1066.7 " fill="none" stroke="#3d9cf2" stroke-width="1.1"/>
<path d="M1047 700 L1403 1066" fill="none" stroke="#2a90f0" stroke-width="1"/>
<!-- arrows -->
<g>
<path d="M946.9 519.2 L971.8 560.5" stroke="#8e8e8e" stroke-width="2.8"/><path d="M946.9 519.2 L971.8 560.5" stroke="#ececec" stroke-width="1.1"/>
<path d="M976.9 569.7 L968 563.2 L977.6 558.6 Z" fill="#a4a4a4" stroke="#8a8a8a" stroke-width="0.7" stroke-linejoin="round"/>
<path d="M976.5 568 L972 562.5" stroke="#d8d8d8" stroke-width="1"/>
<path d="M1063.6 653.4 L1033.8 614.3" stroke="#8e8e8e" stroke-width="2.8"/><path d="M1063.6 653.4 L1033.8 614.3" stroke="#ececec" stroke-width="1.1"/>
<path d="M1027.9 605.6 L1038.2 609.6 L1028.3 616 Z" fill="#c4c4c4" stroke="#9a9a9a" stroke-width="0.7" stroke-linejoin="round"/>
<path d="M1029 608 L1033.5 613.5" stroke="#eeeeee" stroke-width="1"/>
</g>
<!-- leader lines -->
<path d="M1016.4 326 L1015.5 380 L1013.5 430 L1012.6 474" fill="none" stroke="#222" stroke-width="1"/>
<path d="M1129.3 468.5 L1128.3 520 L1126 570 L1124.5 615" fill="none" stroke="#222" stroke-width="1"/>
<rect x="1009.6" y="474.3" width="6" height="6" fill="#e6e6e6" stroke="#222" stroke-width="1"/>
<rect x="1121.3" y="615.3" width="6" height="6" fill="#e6e6e6" stroke="#222" stroke-width="1"/>
<!-- dots -->
<g stroke="#111" stroke-width="1">
<circle cx="943.8" cy="514.9" r="4.8" fill="#12c430"/><path d="M943.8 514.9 h5" />
<circle cx="1066.7" cy="656.5" r="4.8" fill="#12c430"/><path d="M1066.7 656.5 h5"/>
</g>
<g stroke="#c02878" stroke-width="1">
<circle cx="1048.5" cy="456.3" r="4.8" fill="#ff80c0"/><path d="M1048.5 456.3 h5" stroke="#222"/>
<circle cx="1171.5" cy="599.9" r="4.8" fill="#ff80c0"/><path d="M1171.5 599.9 h5" stroke="#222"/>
</g>
<!-- plus marks -->
<path d="M1208.5 353 h6 M1211.5 350 v6" stroke="#5fb0ff" stroke-width="1" fill="none"/>
<path d="M1300 802.5 h6 M1303 799.5 v6" stroke="#6aa0f0" stroke-width="1" fill="none"/>
</svg>
<div style="left:1015px;top:300px;width:141px;height:27px;background:#fff;border:1px solid #000;box-sizing:border-box"></div>
<div style="left:1016px;top:301px;width:11px;height:25px;background:#58a6f4;border-right:1px solid #000"></div>
<div style="left:1030px;top:303px;width:122px;height:21px;background:#fff;border:1px solid #e2e2e2;box-sizing:border-box"></div>
<span class="t" style="left:1034.4px;top:305.3px;height:16px;line-height:16px;font-size:12px;color:#000;letter-spacing:-0.433px;">Curvature To Face</span>
<svg style="left:1136px;top:310.5px" width="12" height="8"><path d="M1 1.2 L5.7 6 L10.4 1.2" fill="none" stroke="#444" stroke-width="1.1"/></svg>
<div style="left:1013px;top:309.5px;width:7px;height:7px;border-radius:50%;border:1px solid #111;background:#fff;box-sizing:border-box"></div>
<div style="left:1016px;top:312.5px;width:4px;height:1px;background:#111"></div>
<div style="left:1128px;top:442px;width:141px;height:27px;background:#fff;border:1px solid #000;box-sizing:border-box"></div>
<div style="left:1129px;top:443px;width:11px;height:25px;background:#58a6f4;border-right:1px solid #000"></div>
<div style="left:1143px;top:445px;width:122px;height:21px;background:#fff;border:1px solid #e2e2e2;box-sizing:border-box"></div>
<span class="t" style="left:1147.4px;top:447.3px;height:16px;line-height:16px;font-size:12px;color:#000;letter-spacing:-0.433px;">Curvature To Face</span>
<svg style="left:1249px;top:452.5px" width="12" height="8"><path d="M1 1.2 L5.7 6 L10.4 1.2" fill="none" stroke="#444" stroke-width="1.1"/></svg>
<div style="left:1126px;top:451.5px;width:7px;height:7px;border-radius:50%;border:1px solid #111;background:#fff;box-sizing:border-box"></div>
<div style="left:1129px;top:454.5px;width:4px;height:1px;background:#111"></div>
<svg style="left:5px;top:12px;" width="24" height="24" viewBox="0 0 24 24"><g fill="none" stroke="#da291c" stroke-width="1.600" stroke-linecap="round" stroke-linejoin="round"><path d="M8.200 1.800 H14 C16.300 1.800 15.800 4 14.400 5.400 L9.500 10.500 L1.200 20.300"/><path d="M3.500 11.300 C8 10 13 9.600 12.300 12.600 C11.500 15.600 6 18.600 1.200 20.300"/><path d="M21 8.200 C18 8.400 15.500 8.300 15.500 10 C15.500 12.500 20 14.300 19.600 16.300 C19.200 18 15 17.900 12 17.900"/></g></svg>
<svg style="left:400px;top:17px;" width="17" height="18" viewBox="0 0 17 18"><g transform="rotate(40 8.5 9)"><path d="M5.5 1.5 H11.5 V3 H10.3 V7.2 L12.6 9.8 H4.4 L6.7 7.2 V3 H5.5 Z" fill="#8a8a8a"/><path d="M8.5 9.8 V16.5" stroke="#8a8a8a" stroke-width="1.3"/></g></svg>
<svg style="left:442px;top:16px;" width="20" height="20" viewBox="0 0 20 20"><path d="M1.5 10.5 L10 2.2 L18.5 10.5 M4 8.6 V18.5 H16 V8.6 M8.3 18.5 V12.3 H11.7 V18.5" fill="none" stroke="#cbcbcb" stroke-width="1.6"/></svg>
<svg style="left:474px;top:16px;" width="16" height="20" viewBox="0 0 16 20"><path d="M1.8 1.8 H10 L14.2 6 V18.4 H1.8 Z M10 1.8 V6 H14.2" fill="#efefef" stroke="#cbcbcb" stroke-width="1.4" stroke-linejoin="round"/></svg>
<svg style="left:500.0px;top:24.0px;" width="7" height="4" viewBox="0 0 7 4"><path d="M0.3 0 H6.7 L3.5 3.6 Z" fill="#9a9a9a"/></svg>
<svg style="left:515px;top:16px;" width="22" height="20" viewBox="0 0 22 20"><path d="M1.5 18 V3.5 H7 L8.5 5.5 H15.5 V8.5" fill="none" stroke="#cbcbcb" stroke-width="1.4"/><path d="M1.5 18 L5.2 8.5 H20.3 L16.5 18 Z" fill="#e6e6e6" stroke="#cbcbcb" stroke-width="1.4" stroke-linejoin="round"/><path d="M9.5 2 C12.5 1.8 14.5 3.5 14.8 6 L17 6 L13.6 9.3 L10.4 6 L12.5 6 C12.2 4.2 11 3.2 9.5 3.2 Z" fill="#cbcbcb"/></svg>
<svg style="left:544.0px;top:24.0px;" width="7" height="4" viewBox="0 0 7 4"><path d="M0.3 0 H6.7 L3.5 3.6 Z" fill="#9a9a9a"/></svg>
<svg style="left:560px;top:16px;" width="20" height="20" viewBox="0 0 20 20"><path d="M2 2 H16.5 L18 3.5 V18 H2 Z" fill="#d6d6d6" stroke="#cbcbcb" stroke-width="1.4" stroke-linejoin="round"/><rect x="5" y="2.5" width="10" height="7" fill="#f1f1f1"/><path d="M6 4.5 H14 M6 6.2 H14 M6 7.9 H14" stroke="#cbcbcb" stroke-width="0.8"/><rect x="6.2" y="12.5" width="8.6" height="5.5" fill="#c4c4c4"/><rect x="8" y="13.5" width="1.6" height="4" fill="#e4e4e4"/><rect x="11" y="13.5" width="1.6" height="4" fill="#e4e4e4"/></svg>
<svg style="left:588.0px;top:24.0px;" width="7" height="4" viewBox="0 0 7 4"><path d="M0.3 0 H6.7 L3.5 3.6 Z" fill="#9a9a9a"/></svg>
<svg style="left:604px;top:16px;" width="20" height="20" viewBox="0 0 20 20"><rect x="5" y="1.5" width="10" height="7" fill="#f4f4f4" stroke="#222" stroke-width="1.3"/><rect x="1.2" y="7.6" width="17.6" height="7.6" rx="1.6" fill="#2f83bf" stroke="#123" stroke-width="1.2"/><rect x="3" y="9" width="14" height="1.8" fill="#8fc6ea"/><rect x="3.2" y="12.3" width="13.6" height="2" fill="#0e3552"/><path d="M3.2 15.2 H16.8 L15.6 18.2 H4.4 Z" fill="#fff" stroke="#222" stroke-width="1.1"/></svg>
<svg style="left:631.9px;top:24.0px;" width="7" height="4" viewBox="0 0 7 4"><path d="M0.3 0 H6.7 L3.5 3.6 Z" fill="#222"/></svg>
<svg style="left:649px;top:17px;" width="18" height="17" viewBox="0 0 18 17"><path d="M1.5 1.8 V8 H8 L5.6 5.8 C7.8 4.4 11.5 4.8 13 7.8 C14 10.2 12.8 12.6 10.6 14.3 L12.2 15.8 C15.8 13.4 17 9.8 15.4 6.4 C13.2 2.4 7.6 1.8 4 4.2 Z" fill="#d4d4d4" stroke="#cbcbcb" stroke-width="0.9" stroke-linejoin="round"/></svg>
<svg style="left:675.9px;top:24.0px;" width="7" height="4" viewBox="0 0 7 4"><path d="M0.3 0 H6.7 L3.5 3.6 Z" fill="#9a9a9a"/></svg>
<svg style="left:692.8px;top:17px;" width="18" height="17" viewBox="0 0 18 17"><g transform="translate(18 0) scale(-1 1)"><path d="M1.5 1.8 V8 H8 L5.6 5.8 C7.8 4.4 11.5 4.8 13 7.8 C14 10.2 12.8 12.6 10.6 14.3 L12.2 15.8 C15.8 13.4 17 9.8 15.4 6.4 C13.2 2.4 7.6 1.8 4 4.2 Z" fill="#d4d4d4" stroke="#cbcbcb" stroke-width="0.9" stroke-linejoin="round"/></g></svg>
<svg style="left:719.9px;top:24.0px;" width="7" height="4" viewBox="0 0 7 4"><path d="M0.3 0 H6.7 L3.5 3.6 Z" fill="#9a9a9a"/></svg>
<svg style="left:739px;top:15px;" width="15" height="21" viewBox="0 0 15 21"><path d="M1.5 1.5 V15.8 L5 12.6 L7.4 18.6 L9.6 17.7 L7.2 11.8 H12 Z" fill="#f2f2f2" stroke="#cbcbcb" stroke-width="1.1" stroke-linejoin="round"/></svg>
<svg style="left:764.0px;top:24.0px;" width="7" height="4" viewBox="0 0 7 4"><path d="M0.3 0 H6.7 L3.5 3.6 Z" fill="#9a9a9a"/></svg>
<svg style="left:784px;top:16px;" width="12" height="20" viewBox="0 0 12 20"><rect x="1" y="1" width="10" height="18" rx="5" fill="#c6c6c6"/><path d="M6 4 v3 M4.5 5.5 h3 M6 12.5 v3 M4.5 14 h3" stroke="#dcdcdc" stroke-width="0.9"/></svg>
<svg style="left:811px;top:16px;" width="18" height="20" viewBox="0 0 18 20"><rect x="1.5" y="1.5" width="15" height="17" fill="#f3f3f3" stroke="#cbcbcb" stroke-width="1.1"/><g fill="#e4e4e4" stroke="#cbcbcb" stroke-width="0.9"><rect x="3.6" y="3.8" width="3.6" height="2.8"/><rect x="3.6" y="8.6" width="3.6" height="2.8"/><rect x="3.6" y="13.4" width="3.6" height="2.8"/></g><path d="M8.8 5.2 H14.5 M8.8 10 H14.5 M8.8 14.8 H14.5" stroke="#cbcbcb" stroke-width="1"/></svg>
<svg style="left:841px;top:17px;" width="18" height="18" viewBox="0 0 18 18"><path d="M16.88 7.65 L16.88 10.35 L14.78 10.60 L14.22 11.96 L15.53 13.62 L13.62 15.53 L11.96 14.22 L10.60 14.78 L10.35 16.88 L7.65 16.88 L7.40 14.78 L6.04 14.22 L4.38 15.53 L2.47 13.62 L3.78 11.96 L3.22 10.60 L1.12 10.35 L1.12 7.65 L3.22 7.40 L3.78 6.04 L2.47 4.38 L4.38 2.47 L6.04 3.78 L7.40 3.22 L7.65 1.12 L10.35 1.12 L10.60 3.22 L11.96 3.78 L13.62 2.47 L15.53 4.38 L14.22 6.04 L14.78 7.40 Z" fill="#f0f0f0" stroke="#222" stroke-width="1.2" stroke-linejoin="round"/><circle cx="9" cy="9" r="2.7" fill="#f7f7f7" stroke="#222" stroke-width="1.2"/></svg>
<svg style="left:868.2px;top:24.0px;" width="7" height="4" viewBox="0 0 7 4"><path d="M0.3 0 H6.7 L3.5 3.6 Z" fill="#222"/></svg>
<svg style="left:1545px;top:20px;" width="17" height="12" viewBox="0 0 17 12"><path d="M1.5 10.5 V1.5 H5.5 L6.8 3 H12.2 V4.8" fill="none" stroke="#444" stroke-width="1.1"/><path d="M1.5 10.5 L4 4.8 H15 L12.6 10.5 Z" fill="#f2f2f2" stroke="#444" stroke-width="1.1" stroke-linejoin="round"/></svg>
<svg style="left:1710px;top:19.5px;" width="15" height="13" viewBox="0 0 15 13"><circle cx="5.3" cy="5.3" r="4.2" fill="none" stroke="#9a9a9a" stroke-width="1.2"/><path d="M8.3 8.3 L13 12" stroke="#9a9a9a" stroke-width="1.6"/></svg>
<svg style="left:1730.8px;top:24.0px;" width="7" height="4" viewBox="0 0 7 4"><path d="M0.3 0 H6.7 L3.5 3.6 Z" fill="#8a8a8a"/></svg>
<svg style="left:1752px;top:16px;" width="20" height="20" viewBox="0 0 20 20"><circle cx="10" cy="10" r="8.6" fill="#fff" stroke="#222" stroke-width="1.3"/><circle cx="10" cy="7.6" r="3.3" fill="#222"/><path d="M3.8 15.5 C4.5 11.5 15.5 11.5 16.2 15.5 C14 18.3 6 18.3 3.8 15.5 Z" fill="#222"/></svg>
<svg style="left:1788px;top:16px;" width="20" height="20" viewBox="0 0 20 20"><circle cx="10" cy="10" r="8.6" fill="#fff" stroke="#333" stroke-width="1.2"/><text x="10" y="14.6" font-size="13" font-weight="bold" text-anchor="middle" fill="#333" font-family="Liberation Sans, sans-serif">?</text></svg>
<div style="left:1829px;top:29.7px;width:10px;height:2px;background:#333"></div>
<svg style="left:1862px;top:19px;" width="17" height="15" viewBox="0 0 17 15"><rect x="1" y="1" width="14.6" height="12.6" fill="#fff" stroke="#333" stroke-width="1.2"/><path d="M8.3 1 V13.6" stroke="#333" stroke-width="1"/><path d="M2.6 7.3 H14 M5 5 L2.6 7.3 L5 9.6 M11.6 5 L14 7.3 L11.6 9.6" fill="none" stroke="#333" stroke-width="1"/></svg>
<svg style="left:1898px;top:18.5px;" width="17" height="15" viewBox="0 0 17 15"><rect x="1" y="1.4" width="14.6" height="12.4" fill="#fff" stroke="#333" stroke-width="1.2"/><rect x="0.4" y="0.6" width="15.8" height="2.6" fill="#333"/></svg>
<svg style="left:1936px;top:21px;" width="12" height="11" viewBox="0 0 12 11"><path d="M1 0.8 L10.8 10 M10.8 0.8 L1 10" stroke="#333" stroke-width="1.5"/></svg>
<svg style="left:1937px;top:107px;" width="11" height="8" viewBox="0 0 11 8"><path d="M1 6.5 L5.5 1.8 L10 6.5" fill="none" stroke="#222" stroke-width="1.5"/></svg>
<svg style="left:24.4px;top:49.8px" width="21.1" height="19.4" viewBox="0 0 24 22"><path d="M1 11 C5 8.500 8 11.500 12.500 6.500 L20.500 11.500 C17 15.500 13 13.500 8.500 20.500 L1 13.500 Z" fill="#d6d6d6" stroke="#cdcdcd" stroke-width="1" stroke-linejoin="round"/><path d="M4.500 10.500 C7 9.500 9 11 12.500 8" fill="none" stroke="#ececec" stroke-width="1.500"/><path d="M12.200 3.400 L14 1.600 L18.300 5.900 L20.200 4 L21.600 10.400 L15.200 9 L17.100 7.100 Z" fill="#cdcdcd"/></svg>
<svg style="left:80.2px;top:49.8px" width="21.1" height="19.4" viewBox="0 0 24 22"><path d="M12 2.5 C18.5 2.5 21 8 19.5 13 C18 18.5 11 20 6.5 17.5 C10 17.8 14.5 15.8 15 11 C15.5 6.5 12 4.5 8 5.5 C9 3.5 10.5 2.5 12 2.5 Z" fill="#e2e2e2" stroke="#cdcdcd" stroke-width="1" stroke-linejoin="round"/><path d="M4.5 8 L17.5 16" stroke="#cdcdcd" stroke-width="0.9"/><path d="M3.5 11.5 C3 7 6 3.5 9 3.2 M3.5 11.5 L2 8.8 M3.5 11.5 L6 9.8" fill="none" stroke="#cdcdcd" stroke-width="1"/></svg>
<svg style="left:132.3px;top:49.8px" width="21.1" height="19.4" viewBox="0 0 24 22"><path d="M4 19 C4 15.5 9.5 16.5 10 12 C10.5 7.5 9.5 3.5 15 2.5 C18 2 20.5 3.5 19.5 6 C18.5 7.5 16.5 6 15.5 6.5 C13.5 7.5 15 12 13.5 15.5 C12 19 8.5 18.5 8 21 Z" fill="#d6d6d6" stroke="#cdcdcd" stroke-width="1" stroke-linejoin="round"/><path d="M15 2.5 C17.5 3 17.2 6.2 15.5 6.5" fill="none" stroke="#cdcdcd" stroke-width="1" stroke-linejoin="round"/><path d="M2.5 16.5 L4.5 19.3" stroke="#cdcdcd" stroke-width="1" stroke-linejoin="round"/></svg>
<svg style="left:180.1px;top:49.8px" width="21.1" height="19.4" viewBox="0 0 24 22"><path d="M8.500 2 H15.500 C15.200 6.500 15.800 9.500 20.500 13.500 L12 20.500 L3.500 13.500 C8.200 9.500 8.800 6.500 8.500 2 Z" fill="#d6d6d6" stroke="#cdcdcd" stroke-width="1" stroke-linejoin="round"/><path d="M8.500 2 C10.500 3 13.500 3 15.500 2" fill="none" stroke="#cdcdcd" stroke-width="1" stroke-linejoin="round"/></svg>
<svg style="left:233.9px;top:49.8px" width="21.1" height="19.4" viewBox="0 0 24 22"><path d="M2 11 C5.500 7.500 8.500 9.500 13 3 L21 9.500 C17.500 14 14 12 9.500 19.500 Z" fill="#d6d6d6" stroke="#cdcdcd" stroke-width="1" stroke-linejoin="round"/><path d="M2 11 L9.500 19.500 L9.800 21 L2 12.800 Z" fill="#cdcdcd"/><path d="M6 8.600 L14 16 M9.500 6.500 L17.500 13.300" stroke="#ebebeb" stroke-width="0.900"/></svg>
<svg style="left:287.2px;top:49.8px" width="21.1" height="19.4" viewBox="0 0 24 22"><path d="M2 11.500 C5.500 7.500 9.500 10 13.500 3 L21.500 9.500 C18 14 13.500 12 9.500 20 Z" fill="#f3f3f3" stroke="#cdcdcd" stroke-width="1" stroke-linejoin="round"/><path d="M6.200 11.400 C8.500 9.500 11 10.500 13.500 7 L17.500 10.200 C15.500 12.500 12.500 12 10 15.600 Z" fill="#d6d6d6" stroke="#cdcdcd" stroke-width="1" stroke-linejoin="round"/></svg>
<svg style="left:339.2px;top:49.8px" width="21.1" height="19.4" viewBox="0 0 24 22"><path d="M12 0.800 L15.200 4.600 H13.100 V9 H10.900 V4.600 H8.800 Z" fill="#cdcdcd"/><path d="M4.500 13 C4.500 9.500 8 10.500 12 8.500 C16 10.500 19.500 9.500 19.500 13 V17.500 C19.500 21.300 4.500 21.300 4.500 17.500 Z" fill="#e2e2e2" stroke="#cdcdcd" stroke-width="1" stroke-linejoin="round"/><path d="M4.500 13.500 C4.500 16.800 19.500 16.800 19.500 13.500" fill="none" stroke="#cdcdcd" stroke-width="1" stroke-linejoin="round"/></svg>
<svg style="left:505.3px;top:49.8px" width="21.1" height="19.4" viewBox="0 0 24 22"><path d="M3 4 C7 2 10 5 14 3 L20 6 C16 8 13 5 9 7 Z" fill="#d6d6d6" stroke="#cdcdcd" stroke-width="1" stroke-linejoin="round"/><path d="M3 16 L14 13 L21 16.5 L10 20 Z" fill="#f0f0f0" stroke="#cdcdcd" stroke-width="1" stroke-linejoin="round"/><path d="M7 7 V14 M5.200 12 L7 14.5 L8.800 12 M16 7.500 V14 M14.200 12 L16 14.5 L17.8 12" fill="none" stroke="#cdcdcd" stroke-width="1.1"/></svg>
<svg style="left:546.4px;top:49.8px" width="21.1" height="19.4" viewBox="0 0 24 22"><path d="M3 7 L12 3 C17 2.500 20.5 5 20.5 9 V15 L11 19.5 L3 16 Z" fill="#f0f0f0" stroke="#cdcdcd" stroke-width="1" stroke-linejoin="round"/><path d="M3 7 L11 10.5 C11 7 14 5 20.5 9 M11 10.5 V19.5" fill="none" stroke="#cdcdcd" stroke-width="1" stroke-linejoin="round"/></svg>
<svg style="left:553.5px;top:110.0px;" width="7" height="4" viewBox="0 0 7 4"><path d="M0.3 0 H6.7 L3.5 3.6 Z" fill="#8a8a8a"/></svg>
<svg style="left:812.4px;top:49.8px" width="21.1" height="19.4" viewBox="0 0 24 22"><path d="M3 3 C5 4.500 8 4.500 10.5 2.500 L12 4 L13.5 2.500 C16 4.500 19 4.500 21 3 C19.5 9 19.5 14 21 19.5 H3 C4.500 14 4.500 9 3 3 Z" fill="#f1f1f1" stroke="#cdcdcd" stroke-width="1" stroke-linejoin="round"/><path d="M12 4 V19.5 M10.5 6.500 L13.5 8 M10.5 9.500 L13.5 11 M10.5 12.5 L13.5 14 M10.5 15.5 L13.5 17" stroke="#cdcdcd" stroke-width="0.9"/></svg>
<svg style="left:998.0px;top:49.8px" width="21.1" height="19.4" viewBox="0 0 24 22"><circle cx="3.800" cy="4" r="2.300" fill="#d6d6d6" stroke="#cdcdcd" stroke-width="1" stroke-linejoin="round"/><path d="M9.500 7 L19.5 3 V15.5 L9.500 19.5 Z" fill="#e2e2e2" stroke="#cdcdcd" stroke-width="1" stroke-linejoin="round"/><path d="M14.500 2 V21" stroke="#cdcdcd" stroke-width="0.9" stroke-dasharray="2.500 1.200"/></svg>
<svg style="left:1050.2px;top:49.8px" width="21.1" height="19.4" viewBox="0 0 24 22"><path d="M2.600 0.800 C7 2 9.600 6 8.200 9.600 C6.600 13 5 16 6.800 18.300 C9 21 15 20.600 16.600 18.500 C18.600 15 15.200 10 17.600 6 C18.600 3.600 20.500 2 22 1.600" fill="none" stroke="#cdcdcd" stroke-width="1.300"/></svg>
<svg style="left:1005.1px;top:110.0px;" width="7" height="4" viewBox="0 0 7 4"><path d="M0.3 0 H6.7 L3.5 3.6 Z" fill="#8a8a8a"/></svg>
<svg style="left:1057.3px;top:110.0px;" width="7" height="4" viewBox="0 0 7 4"><path d="M0.3 0 H6.7 L3.5 3.6 Z" fill="#8a8a8a"/></svg>
<svg style="left:382.9px;top:47.5px;" width="20" height="19" viewBox="0 0 20 19"><path d="M2 5 L18 2 V15 L2 17.5 Z" fill="#e2e2e2" stroke="#cdcdcd" stroke-width="1" stroke-linejoin="round"/></svg>
<svg style="left:382.9px;top:73.5px;" width="20" height="19" viewBox="0 0 20 19"><path d="M3 6.500 C5 3.500 9.500 1.500 12.5 3.500 L17.5 6.500 C14 5 10.5 6.500 8.500 9.500 Z" fill="#efefef" stroke="#cdcdcd" stroke-width="1" stroke-linejoin="round"/><path d="M3 11.5 C5 8.500 9.500 6.500 12.5 8.500 L17.5 11 V15.5 L9 18.500 L3 15.5 Z" fill="#efefef" stroke="#cdcdcd" stroke-width="1" stroke-linejoin="round"/><path d="M3 11.5 L9 14.5 L17.5 11 M9 14.5 V18.500" fill="none" stroke="#cdcdcd" stroke-width="1" stroke-linejoin="round"/></svg>
<svg style="left:382.9px;top:99.5px;" width="20" height="19" viewBox="0 0 20 19"><path d="M2 12 C8 11 10 8 10.5 2.500 L17.5 2 C17 11 12 17 2.500 18.500 Z" fill="#f0f0f0" stroke="#cdcdcd" stroke-width="1" stroke-linejoin="round"/><path d="M6 11.5 L7.500 17.5 M9.500 9 L13 14.5 M10.3 5.500 L16.500 8" stroke="#cdcdcd" stroke-width="0.8"/></svg>
<svg style="left:580px;top:47.5px;" width="20" height="19" viewBox="0 0 20 19"><path d="M2.500 5.500 L10 2 L17.5 5.500 V14 L10 17.5 L2.500 14 Z" fill="#f1f1f1" stroke="#cdcdcd" stroke-width="1" stroke-linejoin="round"/><path d="M2.500 5.500 L10 9 L17.5 5.500 M10 9 V17.5" fill="none" stroke="#cdcdcd" stroke-width="1" stroke-linejoin="round"/><path d="M11.5 9.500 L16 14 M16 9.500 L11.5 14" stroke="#cdcdcd" stroke-width="1.500"/></svg>
<svg style="left:580px;top:73.5px;" width="20" height="19" viewBox="0 0 20 19"><path d="M4 3.500 L12 2 L16 4 L8 5.500 Z" fill="#d6d6d6" stroke="#cdcdcd" stroke-width="1" stroke-linejoin="round"/><path d="M2.500 9 L10 6.500 L17.5 9 V15 L10 18 L2.500 15 Z" fill="#f1f1f1" stroke="#cdcdcd" stroke-width="1" stroke-linejoin="round"/><path d="M2.500 9 L10 11.5 L17.5 9 M10 11.5 V18" fill="none" stroke="#cdcdcd" stroke-width="1" stroke-linejoin="round"/><path d="M3 6.500 C7 5 12 5 17 6.500" fill="none" stroke="#cdcdcd" stroke-width="1" stroke-linejoin="round"/></svg>
<svg style="left:580px;top:99.5px;" width="20" height="19" viewBox="0 0 20 19"><path d="M2 9 C5 4 8 9 11.5 3 L18 7 C15 12.5 11.5 8 8.500 14.5 Z" fill="#f0f0f0" stroke="#cdcdcd" stroke-width="1" stroke-linejoin="round"/><circle cx="9.500" cy="8.500" r="2.200" fill="#f7f7f7" stroke="#cdcdcd" stroke-width="1" stroke-linejoin="round"/><path d="M11 11.5 L17 17.5 M17 11.5 L11 17.5" stroke="#cdcdcd" stroke-width="1.800"/></svg>
<svg style="left:687.2px;top:47.5px;" width="20" height="19" viewBox="0 0 20 19"><path d="M2 8 C5 3 8 8 11.5 2 L18 6 C15 11.5 11.5 7 8.500 13.5 Z" fill="#ececec" stroke="#cdcdcd" stroke-width="1" stroke-linejoin="round"/><path d="M10 10 L16 16 M16 11.5 V16 H11.5" fill="none" stroke="#cdcdcd" stroke-width="1.500"/></svg>
<svg style="left:687.2px;top:73.5px;" width="20" height="19" viewBox="0 0 20 19"><path d="M2 9 C5 4 8 9 11.5 3 L18 7 C15 12.5 11.5 8 8.500 14.5 Z" fill="#e2e2e2" stroke="#cdcdcd" stroke-width="1" stroke-linejoin="round"/><path d="M2 9 L8.500 14.5 V17.5 L2 12 Z" fill="#d6d6d6" stroke="#cdcdcd" stroke-width="1" stroke-linejoin="round"/></svg>
<svg style="left:687.2px;top:99.5px;" width="20" height="19" viewBox="0 0 20 19"><path d="M2 10 C5 5 8 10 11.5 4 L18 8 C15 13.500 11.5 9 8.500 15.5 Z" fill="#efefef" stroke="#cdcdcd" stroke-width="1" stroke-linejoin="round"/><path d="M11.5 4 L15 2 L18 8" fill="#d6d6d6" stroke="#cdcdcd" stroke-width="1" stroke-linejoin="round"/></svg>
<svg style="left:851.7px;top:47.5px;" width="20" height="19" viewBox="0 0 20 19"><path d="M2 6 L8 3 L13 5.500 V13 L7 16.500 L2 14 Z" fill="#e2e2e2" stroke="#cdcdcd" stroke-width="1" stroke-linejoin="round"/><path d="M2 6 L7 8.500 L13 5.500 M7 8.500 V16.500" fill="none" stroke="#cdcdcd" stroke-width="1" stroke-linejoin="round"/><path d="M16 4 V14 M13.800 11.5 L16 14.5 L18.200 11.5" fill="none" stroke="#cdcdcd" stroke-width="1.300"/></svg>
<svg style="left:851.7px;top:73.5px;" width="20" height="19" viewBox="0 0 20 19"><path d="M2 10 L9 7 L15 9.500 V14.5 L8 18 L2 15 Z" fill="#f0f0f0" stroke="#cdcdcd" stroke-width="1" stroke-linejoin="round"/><path d="M2 10 L8 12.5 L15 9.500 M8 12.5 V18" fill="none" stroke="#cdcdcd" stroke-width="1" stroke-linejoin="round"/><path d="M4 5.500 C7 3 9 6 12 3.500" fill="none" stroke="#cdcdcd" stroke-width="1.200"/><path d="M16 2 V10 M13.800 7.500 L16 10.5 L18.200 7.500" fill="none" stroke="#cdcdcd" stroke-width="1.300"/></svg>
<svg style="left:851.7px;top:99.5px;" width="20" height="19" viewBox="0 0 20 19"><path d="M3 5 L11 2 L17 4.500 L9 7.500 Z" fill="#e2e2e2" stroke="#cdcdcd" stroke-width="1" stroke-linejoin="round"/><path d="M3 5 V8 L9 10.5 L17 7.500 V4.500 L9 7.500 Z" fill="#f0f0f0" stroke="#cdcdcd" stroke-width="1" stroke-linejoin="round"/><path d="M3 11.5 L9 14 L17 11 V14 L9 17.5 L3 14.5 Z" fill="#f0f0f0" stroke="#cdcdcd" stroke-width="1" stroke-linejoin="round"/><path d="M2 9.500 C6 11.5 12 11.5 18 8.800" fill="none" stroke="#cdcdcd" stroke-width="1" stroke-linejoin="round"/></svg>
<svg style="left:951px;top:130px;" width="20" height="20" viewBox="0 0 20 20"><path d="M9.2 12 L2.8 18" stroke="#3c7fa8" stroke-width="3.6" stroke-linecap="round"/><path d="M9.2 12 L2.8 18" stroke="#8cc4e4" stroke-width="1.8" stroke-linecap="round"/><circle cx="12.4" cy="7.3" r="6" fill="#e9eef2" stroke="#666" stroke-width="1.2"/><path d="M12.4 2.600 l1.400 1.600 h-2.800 Z M12.4 12 l1.400 -1.600 h-2.800 Z M7.700 7.300 l1.600 -1.400 v2.800 Z M17.1 7.300 l-1.600 -1.400 v2.800 Z" fill="#444"/></svg>
<svg style="left:976px;top:130px;" width="21" height="20" viewBox="0 0 21 20"><rect x="7.300" y="1.500" width="12.5" height="12" fill="none" stroke="#444" stroke-width="1.100" stroke-dasharray="2.600 1.600"/><path d="M7.800 14 L2.500 18.500" stroke="#3c7fa8" stroke-width="3.600" stroke-linecap="round"/><path d="M7.800 14 L2.500 18.500" stroke="#8cc4e4" stroke-width="1.800" stroke-linecap="round"/><circle cx="11.3" cy="10.200" r="6.200" fill="#e6ebef" stroke="#777" stroke-width="1.200"/></svg>
<svg style="left:1003px;top:130px;" width="21" height="20" viewBox="0 0 21 20"><g transform="translate(0.5 1.5)"><path d="M1.300 11.800 L9.600 4.800 L13.200 9 L6.200 17.200 Z" fill="#dedede" stroke="#666" stroke-width="1" stroke-linejoin="round"/><path d="M9.800 5 L14.800 1 L18 4.600 L13 8.800 Z" fill="#f2f2f2" stroke="#666" stroke-width="1" stroke-linejoin="round"/><path d="M11.800 3.500 L15.200 7" stroke="#888" stroke-width="0.800"/><ellipse cx="3.800" cy="14.500" rx="3.300" ry="1.900" transform="rotate(50 3.800 14.500)" fill="#b8b8b8" stroke="#666" stroke-width="0.900"/><ellipse cx="3.800" cy="14.500" rx="1.800" ry="0.900" transform="rotate(50 3.800 14.500)" fill="#e8e8e8"/></g><path d="M19 14.300 H13.200 M13.200 14.300 m-3.500 0 l4.300 -3.200 v6.400 Z" fill="#3c86b4" stroke="#3c86b4" stroke-width="2"/></svg>
<svg style="left:1029px;top:131px;" width="20" height="19" viewBox="0 0 20 19"><path d="M1.500 6 C1.500 2 18.500 2 18.500 6 V14 C18.500 17 14 17.5 12.5 17.5 V9.500 C11 8 9 8 7.500 9.500 V17.5 C4 17.5 1.500 16 1.500 14 Z" fill="#ececec" stroke="#dcdcdc" stroke-width="1"/><path d="M3 10 L6.500 7 M3 13 L6.500 10 M3 16 L6.500 13 M14 10 L17.5 7 M14 13 L17.5 10 M14 16 L17.5 13" stroke="#d6d6d6" stroke-width="1"/></svg>
<svg style="left:1055px;top:130px;" width="22" height="20" viewBox="0 0 22 20"><path d="M4.500 1 H12.500 L9.500 4.500 H12 L3 11.5 L6 6.500 H3 Z" fill="#f6c12a" stroke="#e0742a" stroke-width="1"/><g transform="translate(1.5 1.5)"><path d="M1.300 11.800 L9.600 4.800 L13.200 9 L6.200 17.200 Z" fill="#dedede" stroke="#666" stroke-width="1" stroke-linejoin="round"/><path d="M9.800 5 L14.800 1 L18 4.600 L13 8.800 Z" fill="#f2f2f2" stroke="#666" stroke-width="1" stroke-linejoin="round"/><path d="M11.800 3.500 L15.200 7" stroke="#888" stroke-width="0.800"/><ellipse cx="3.800" cy="14.500" rx="3.300" ry="1.900" transform="rotate(50 3.800 14.500)" fill="#b8b8b8" stroke="#666" stroke-width="0.900"/><ellipse cx="3.800" cy="14.500" rx="1.800" ry="0.900" transform="rotate(50 3.800 14.500)" fill="#e8e8e8"/></g><text x="16.500" y="19" font-size="12" font-family="Liberation Serif, serif" fill="#3c86b4" text-anchor="middle" font-weight="bold">A</text></svg>
<svg style="left:1081px;top:130px;" width="20" height="20" viewBox="0 0 20 20"><path d="M1.500 6.500 L7 1.500 H18.500 V14 L13.500 18.500" fill="#fff" stroke="#444" stroke-width="1.100"/><path d="M18.500 1.500 L13.500 6.500" stroke="#444" stroke-width="1"/><rect x="1.500" y="6.500" width="12" height="12" fill="#8cc3e2" stroke="#2a6a94" stroke-width="1.200"/><path d="M12.5 2 v3.500 M11 4 l1.500 1.800 l1.500 -1.800 M18 10.5 h-3.500 M16 9 l-1.800 1.500 l1.800 1.500" fill="none" stroke="#333" stroke-width="0.900"/></svg>
<svg style="left:1106.9px;top:138.5px;" width="7" height="4" viewBox="0 0 7 4"><path d="M0.3 0 H6.7 L3.5 3.6 Z" fill="#9a9a9a"/></svg>
<svg style="left:1122px;top:129.5px;" width="19" height="20" viewBox="0 0 19 20"><path d="M1.500 4.500 L9.500 1.500 L17.5 4.500 V15.5 L7.500 19 L1.500 15.500 Z" fill="#f4f4f4" stroke="#555" stroke-width="1.100" stroke-linejoin="round"/><path d="M1.500 4.500 L7.500 7 V19 L1.500 15.500 Z" fill="#5aa4cc"/><path d="M7.500 7 L12 5.500 V17.4 L7.500 19 Z" fill="#a6d6ee"/><path d="M1.500 4.500 L9.500 1.500 L14 3.200 L7.500 7 Z" fill="#8cc6e4"/><path d="M1.500 4.500 L7.500 7 L17.5 4.500 M7.500 7 V19" fill="none" stroke="#555" stroke-width="1"/></svg>
<svg style="left:1147.0px;top:138.5px;" width="7" height="4" viewBox="0 0 7 4"><path d="M0.3 0 H6.7 L3.5 3.6 Z" fill="#9a9a9a"/></svg>
<svg style="left:1161px;top:131px;" width="20" height="18" viewBox="0 0 20 18"><path d="M1.200 9 C5 2.500 15 2.500 18.800 9 C15 15.500 5 15.500 1.200 9 Z" fill="#e4e4e4" stroke="#8a8a8a" stroke-width="1.100"/><circle cx="10" cy="8.500" r="4.300" fill="#8a8a8a"/><path d="M10 4.200 A4.300 4.300 0 0 0 10 12.800 Z" fill="#4a4a4a"/><path d="M10.200 1 V17" stroke="#555" stroke-width="1.100"/></svg>
<svg style="left:1187.1px;top:138.5px;" width="7" height="4" viewBox="0 0 7 4"><path d="M0.3 0 H6.7 L3.5 3.6 Z" fill="#9a9a9a"/></svg>
<svg style="left:1201px;top:129.5px;" width="21" height="21" viewBox="0 0 21 21"><circle cx="8.500" cy="8" r="7.500" fill="#ececec" stroke="#e0e0e0" stroke-width="0.800"/><path d="M7 19.500 L8.500 15 L17 6.500 L19.500 9 L11 17.500 Z" fill="#f2f2f2" stroke="#d8d8d8" stroke-width="1"/></svg>
<svg style="left:1226px;top:129.5px;" width="20" height="21" viewBox="0 0 20 21"><rect x="1" y="8" width="18" height="12" fill="#e4e4e4"/><circle cx="10" cy="8.500" r="7.500" fill="#ececec" stroke="#e0e0e0" stroke-width="0.800"/><path d="M5 20 L6.500 16.500 H9 L8.500 20 Z M12 20 L11.600 16.500 H14 L15.500 20 Z" fill="#f7f7f7"/></svg>
<svg style="left:1252.7px;top:138.5px;" width="7" height="4" viewBox="0 0 7 4"><path d="M0.3 0 H6.7 L3.5 3.6 Z" fill="#9a9a9a"/></svg>
<svg style="left:1267px;top:131px;" width="20" height="18" viewBox="0 0 20 18"><rect x="1.600" y="1.600" width="16.800" height="11.300" fill="#e2e2e2" stroke="#4a4a4a" stroke-width="1.400"/><path d="M10 13 V15.800 M6 16.300 H14" stroke="#4a4a4a" stroke-width="1.600"/></svg>
<svg style="left:1292.8px;top:138.5px;" width="7" height="4" viewBox="0 0 7 4"><path d="M0.3 0 H6.7 L3.5 3.6 Z" fill="#9a9a9a"/></svg>
<svg style="left:1827px;top:133.5px;" width="12" height="13" viewBox="0 0 12 13"><rect x="0.600" y="0.600" width="10.400" height="11.600" fill="none" stroke="#a8a8a8" stroke-width="1"/><path d="M5.500 3.800 L2.500 6.400 L5.500 9 Z" fill="#a8a8a8"/></svg>
<svg style="left:1853px;top:133.5px;" width="12" height="13" viewBox="0 0 12 13"><rect x="0.600" y="0.600" width="10.400" height="11.600" fill="none" stroke="#a8a8a8" stroke-width="1"/><path d="M6.500 3.800 L9.500 6.400 L6.500 9 Z" fill="#a8a8a8"/></svg>
<div style="left:1880px;top:144px;width:10px;height:2px;background:#a8a8a8"></div>
<svg style="left:1904px;top:133px;" width="15" height="14" viewBox="0 0 15 14"><rect x="4.600" y="0.800" width="9.200" height="7" fill="none" stroke="#a8a8a8" stroke-width="1.300"/><rect x="0.800" y="5.200" width="9.200" height="7" fill="#fff" stroke="#a8a8a8" stroke-width="1.300"/></svg>
<svg style="left:1931px;top:134px;" width="12" height="12" viewBox="0 0 12 12"><path d="M1 1 L10.5 10.500 M10.5 1 L1 10.500" stroke="#a8a8a8" stroke-width="1.200"/></svg>
<svg style="left:1852px;top:158px;" width="32" height="26" viewBox="0 0 32 26"><path d="M3 13.500 L6.500 10 L12.500 15.500 L25.500 2.500 L29.500 6 L12.500 23.500 Z" fill="#d2ecd0"/></svg>
<svg style="left:1898px;top:189px;" width="26" height="26" viewBox="0 0 26 26"><path d="M2 5 L5.500 1.500 L13 9 L20.500 1.500 L24 5 L16.500 12.500 L24 20 L20.500 23.500 L13 16 L5.500 23.500 L2 20 L9.500 12.500 Z" fill="#f6d2d0" stroke="#f6d2d0" stroke-width="1.500" stroke-linejoin="round"/></svg>
<svg style="left:304.5px;top:157.5px;" width="6" height="9" viewBox="0 0 6 9"><path d="M0.500 0.300 L5 4 L0.500 7.700 Z" fill="#222"/></svg>
<svg style="left:322px;top:152px;" width="20" height="20" viewBox="0 0 20 20"><path d="M2 9 V5.500 L7 2 L11.500 3.500 V7.500 L17.500 10 V14.500 L12 18 L2 13 Z" fill="#f4cf3e" stroke="#8c6c08" stroke-width="1.200" stroke-linejoin="round"/><path d="M7 2 L11.500 3.500 L6.500 6 L2 5.500 M6.500 6 V10.500 L12 14 L17.500 10 M12 14 V18" fill="none" stroke="#8c6c08" stroke-width="1"/><path d="M2.500 5.800 L6.500 6.300 L11 3.800 L7 2.500 Z" fill="#fae47c"/></svg>
<svg style="left:13px;top:173.5px;" width="22" height="21" viewBox="0 0 22 21"><path d="M2 9.500 V6 L7.500 2 L12 3.500 V8 L18.500 10.500 V15 L12.500 19 L2 13.500 Z" fill="#f4cf3e" stroke="#8c6c08" stroke-width="1.200" stroke-linejoin="round"/><path d="M7.500 2 L12 3.500 L7 6.500 L2 6 M7 6.500 V11 L12.500 14.500 L18.500 10.500 M12.500 14.500 V19" fill="none" stroke="#8c6c08" stroke-width="1"/><path d="M2.500 6.300 L7 6.800 L11.500 3.800 L7.500 2.500 Z" fill="#fae47c"/></svg>
<svg style="left:53px;top:174px;" width="20" height="20" viewBox="0 0 20 20"><rect x="1.300" y="1.300" width="17.400" height="17.400" rx="1.500" fill="#fff" stroke="#1e3c52" stroke-width="1.300"/><rect x="1.900" y="1.900" width="16.200" height="3.400" fill="#4e8fba"/><g fill="#2f76a6"><rect x="3.600" y="7" width="4" height="2.400"/><rect x="3.600" y="11" width="4" height="2.400"/><rect x="3.600" y="15" width="4" height="2.400"/></g><path d="M9.500 8.200 H16.500 M9.500 12.200 H16.500 M9.500 16.200 H16.500" stroke="#1e3c52" stroke-width="1.100"/></svg>
<svg style="left:94px;top:174px;" width="18" height="20" viewBox="0 0 18 20"><path d="M3 1.500 V18.500 M1.300 1.500 H4.700 M1.300 18.500 H4.700 M3 5.500 H8 M3 14.500 H10" stroke="#333" stroke-width="1.400" fill="none"/><rect x="7.800" y="2.300" width="6" height="6.400" rx="0.800" fill="#fff" stroke="#333" stroke-width="1.300"/><rect x="9.800" y="11.300" width="6" height="6.400" rx="0.800" fill="#fff" stroke="#333" stroke-width="1.300"/></svg>
<svg style="left:133px;top:174px;" width="20" height="20" viewBox="0 0 20 20"><circle cx="10" cy="10" r="6.200" fill="none" stroke="#111" stroke-width="1.700"/><path d="M10 0.800 V19.200 M0.800 10 H19.200" stroke="#111" stroke-width="1.700"/></svg>
<svg style="left:173px;top:173px;" width="21" height="21" viewBox="0 0 21 21"><defs><clipPath id="bc103"><circle cx="10.3" cy="10.2" r="9"/></clipPath></defs><g clip-path="url(#bc103)"><rect x="1.3000000000000007" y="1.1999999999999993" width="9" height="9" fill="#2f6fd0"/><rect x="10.3" y="1.1999999999999993" width="9" height="10" fill="#d8281e"/><rect x="1.3000000000000007" y="10.2" width="10" height="9" fill="#3aa83a"/><path d="M9.3 19.2 L11.3 11.2 L19.3 9.2 V19.2 Z" fill="#f0c020"/><circle cx="7.600000000000001" cy="7.049999999999999" r="4.05" fill="#fff" opacity="0.35"/></g><ellipse cx="14.08" cy="7.319999999999999" rx="2.6999999999999997" ry="4.95" transform="rotate(-28 14.08 7.319999999999999)" fill="#1a0a0a"/><circle cx="10.3" cy="10.2" r="9" fill="none" stroke="#7a7a7a" stroke-width="0.600"/></svg>
<svg style="left:10px;top:204px;" width="20" height="18" viewBox="0 0 20 18"><path d="M1.500 7.500 C5 3 8 7.500 11.500 1.500 L18.500 6 C15 12 12 7.500 8.500 12.500 Z" fill="#7db4d2" stroke="#1f4e6e" stroke-width="1.100" stroke-linejoin="round"/><path d="M1.500 7.500 L8.500 12.500 V16.500 L1.500 11.500 Z" fill="#4a86aa" stroke="#1f4e6e" stroke-width="1" stroke-linejoin="round"/><path d="M8.500 12.500 C12 7.500 15 12 18.500 6 V9.500 C15 15.500 12 11.500 8.500 16.500 Z" fill="#5c98ba" stroke="#1f4e6e" stroke-width="1" stroke-linejoin="round"/><path d="M5 5.600 L12 10 M8.500 5 L15.500 9.500" stroke="#1f4e6e" stroke-width="0.700"/></svg>
<svg style="left:270px;top:205px;" width="16" height="16" viewBox="0 0 16 16"><circle cx="8" cy="8" r="6.800" fill="#fff" stroke="#333" stroke-width="1.100"/><text x="8" y="12" font-size="11" font-weight="bold" text-anchor="middle" fill="#2a6a9a" font-family="Liberation Sans, sans-serif">?</text></svg>
<svg style="left:8.5px;top:233.5px;" width="15" height="13" viewBox="0 0 15 13"><path d="M1 7.200 L2.800 5.500 L5.600 8.300 L13 1.200 L14.300 2.500 L5.600 12.300 Z" fill="#2e9e1a"/></svg>
<svg style="left:37.5px;top:234.5px;" width="12" height="12" viewBox="0 0 12 12"><path d="M1.300 1.300 L10.800 10.800 M10.800 1.300 L1.300 10.800" stroke="#e01b0c" stroke-width="2"/></svg>
<svg style="left:12px;top:443.5px;" width="20" height="19" viewBox="0 0 20 19"><path d="M3 10 A7 7 0 0 1 16.500 7.500" fill="none" stroke="#2a6a9c" stroke-width="1.500"/><path d="M18.500 6.800 L13.500 6.500 L16.500 10.800 Z" fill="#1d3c54"/><path d="M17 10.500 A7 7 0 0 1 3.500 12" fill="none" stroke="#d4d4d4" stroke-width="1.500"/><path d="M1.500 12.500 L6.300 13 L3.500 9 Z" fill="#d4d4d4"/></svg>
<svg style="left:12px;top:475.5px;" width="20" height="19" viewBox="0 0 20 19"><path d="M3.500 9.500 L12 2.500" stroke="#111" stroke-width="2"/><path d="M13.500 1 V8 L10.800 5.700 L8.500 3.800 L6.500 1 Z" fill="#111"/><path d="M16.500 9.500 L9 16" stroke="#d0d0d0" stroke-width="2"/><path d="M7.500 17.500 V10.500 L14.500 17.500 Z" fill="#d0d0d0"/></svg>
<svg style="left:137px;top:741px;" width="16" height="16" viewBox="0 0 16 16"><path d="M1.500 1.500 V6.500 H6.500 L4.600 4.600 C6.500 3.500 9.500 4 10.800 6.500 C11.600 8.500 10.600 10.600 8.800 12 L10.200 13.300 C13.200 11.300 14.200 8.300 12.800 5.500 C11 2.200 6.500 1.600 3.500 3.500 Z" fill="#dcdcdc" stroke="#aaa" stroke-width="0.900" stroke-linejoin="round"/></svg>
<svg style="left:29px;top:1076px;" width="15" height="14" viewBox="0 0 15 14"><path d="M10 3 L5 7 L10 11 Z M4 3 V11" fill="#8c8c8c" stroke="#8c8c8c" stroke-width="0.800"/></svg>
<svg style="left:45px;top:1076px;" width="15" height="14" viewBox="0 0 15 14"><path d="M10 3 L5 7 L10 11 Z" fill="#8c8c8c" stroke="#8c8c8c" stroke-width="0.800"/></svg>
<svg style="left:61px;top:1076px;" width="15" height="14" viewBox="0 0 15 14"><path d="M5 3 L10 7 L5 11 Z" fill="#8c8c8c" stroke="#8c8c8c" stroke-width="0.800"/></svg>
<svg style="left:77px;top:1076px;" width="15" height="14" viewBox="0 0 15 14"><path d="M5 3 L10 7 L5 11 Z M11 3 V11" fill="#8c8c8c" stroke="#8c8c8c" stroke-width="0.800"/></svg>
<div style="left:1931px;top:201px;width:26px;height:192px;background:#d4d4d4;border:1px solid #9a9a9a;box-sizing:border-box;"></div>
<div style="left:1932px;top:202px;width:24px;height:22.599999999999994px;background:#f7f7f7;"></div>
<div style="left:1931px;top:224.6px;width:26px;height:1px;background:#9a9a9a;"></div>
<div style="left:1931px;top:248.6px;width:26px;height:1px;background:#9a9a9a;"></div>
<div style="left:1931px;top:272.6px;width:26px;height:1px;background:#9a9a9a;"></div>
<div style="left:1931px;top:296.6px;width:26px;height:1px;background:#9a9a9a;"></div>
<div style="left:1931px;top:320.6px;width:26px;height:1px;background:#9a9a9a;"></div>
<div style="left:1931px;top:344.6px;width:26px;height:1px;background:#9a9a9a;"></div>
<div style="left:1931px;top:368.6px;width:26px;height:1px;background:#9a9a9a;"></div>
<svg style="left:1934.1px;top:203.0px" width="20.2" height="20.2" viewBox="0 0 22 22"><path d="M2 10.500 L11 2.500 L20 10.500" fill="none" stroke="#1e5078" stroke-width="2.200"/><path d="M5 9.500 V19.500 H17 V9.500" fill="#fff" stroke="#222" stroke-width="1.300"/><path d="M9.500 19.500 V12.500 H12.800 V19.500" fill="none" stroke="#222" stroke-width="1.200"/></svg>
<svg style="left:1934.1px;top:226.8px" width="20.2" height="20.2" viewBox="0 0 22 22"><g fill="#f4f4f4" stroke="#333" stroke-width="1.100" stroke-linejoin="round"><path d="M4 6 L7.500 4 L10 5.500 V18 L7 20 L4 18 Z"/><path d="M8.500 5 L12 3 L14.500 4.500 V17 L11.500 19.500 L8.500 17.500 Z"/><path d="M13 4 L16.500 2.500 L19 4 V16 L16 18.500 L13 16.500 Z"/></g></svg>
<svg style="left:1934.1px;top:250.8px" width="20.2" height="20.2" viewBox="0 0 22 22"><path d="M2.500 18.500 V4 H8.500 L10 6 H17 V9" fill="#f2f2f2" stroke="#333" stroke-width="1.200"/><path d="M2.500 18.500 L6 9 H20.500 L17 18.500 Z" fill="#fafafa" stroke="#333" stroke-width="1.200" stroke-linejoin="round"/></svg>
<svg style="left:1934.1px;top:274.8px" width="20.2" height="20.2" viewBox="0 0 22 22"><rect x="2.500" y="3" width="17" height="16" rx="2" fill="#f4f4f4" stroke="#333" stroke-width="1.300"/><path d="M5 6 H11.500 V8.500 H9.500 V12.500 H12 V15.500 H5 V12.500 H7.200 V8.500 H5 Z" fill="#f4c62a" stroke="#8a6a0a" stroke-width="0.700"/><rect x="13.500" y="5.500" width="3.500" height="3" fill="#f4c62a" stroke="#8a6a0a" stroke-width="0.700"/><rect x="14.500" y="11" width="3" height="6" fill="#cfcfcf" stroke="#777" stroke-width="0.700"/></svg>
<svg style="left:1934.1px;top:298.8px" width="20.2" height="20.2" viewBox="0 0 22 22"><defs><clipPath id="bc110"><circle cx="11" cy="11" r="8.3"/></clipPath></defs><g clip-path="url(#bc110)"><rect x="2.6999999999999993" y="2.6999999999999993" width="8.3" height="8.3" fill="#2f6fd0"/><rect x="11" y="2.6999999999999993" width="8.3" height="9.3" fill="#d8281e"/><rect x="2.6999999999999993" y="11" width="9.3" height="8.3" fill="#3aa83a"/><path d="M10 19.3 L12 12 L19.3 10 V19.3 Z" fill="#f0c020"/><circle cx="8.51" cy="8.094999999999999" r="3.7350000000000003" fill="#fff" opacity="0.35"/></g><circle cx="11" cy="11" r="8.3" fill="none" stroke="#7a7a7a" stroke-width="0.600"/></svg>
<svg style="left:1934.1px;top:322.8px" width="20.2" height="20.2" viewBox="0 0 22 22"><rect x="2.800" y="2.800" width="16.400" height="16.400" rx="1" fill="#fff" stroke="#1e3c52" stroke-width="1.300"/><rect x="3.400" y="3.400" width="15.200" height="3" fill="#4e8fba"/><g fill="#2f76a6"><rect x="5" y="8.200" width="3.800" height="2.200"/><rect x="5" y="12" width="3.800" height="2.200"/><rect x="5" y="15.800" width="3.800" height="2.200"/></g><path d="M10.500 9.300 H17 M10.500 13.100 H17 M10.500 16.900 H17" stroke="#1e3c52" stroke-width="1"/></svg>
<svg style="left:1934.1px;top:346.8px" width="20.2" height="20.2" viewBox="0 0 22 22"><defs><radialGradient id="b3d" cx="0.4" cy="0.3" r="0.8"><stop offset="0" stop-color="#3f86c8"/><stop offset="0.6" stop-color="#0d3f78"/><stop offset="1" stop-color="#031c3a"/></radialGradient></defs><circle cx="11" cy="11" r="9.300" fill="url(#b3d)"/><path d="M9 7.500 L14.500 11 L9 14.500 Z" fill="none" stroke="#e8f2ff" stroke-width="1.100" stroke-linejoin="round"/><path d="M4.500 9 A7 7 0 0 1 17.500 9" fill="none" stroke="#8fc0ee" stroke-width="0.800" opacity="0.700"/></svg>
<svg style="left:1934.1px;top:370.8px" width="20.2" height="20.2" viewBox="0 0 22 22"><rect x="2.500" y="3" width="14" height="10.500" fill="#f4f4f4" stroke="#333" stroke-width="1.200"/><path d="M5 6 H14 M5 8.500 H12" stroke="#555" stroke-width="1"/><path d="M6 17 H13 M9.500 13.500 V17" stroke="#333" stroke-width="1.200"/><path d="M9.500 13 L13.500 10.500 L19.500 12.500 V17.500 L15 20.500 L9.500 18 Z" fill="#f4c62a" stroke="#8a6a0a" stroke-width="0.900" stroke-linejoin="round"/><path d="M13.500 8.500 L17 7.500 L19.500 9 V12.500 L16 13.500 L13.500 12 Z" fill="#6ab0dc" stroke="#1e5078" stroke-width="0.800" stroke-linejoin="round"/></svg>
<svg style="left:1741px;top:1092.5px" width="18.7" height="16.2" viewBox="0 0 22 19"><path d="M2 11.500 L7.500 2 L13 11.500 Z" fill="#f6c12a" stroke="#d8641a" stroke-width="1"/><path d="M7.500 5 V8.500 M7.500 9.800 V10.800" stroke="#222" stroke-width="1.200"/><path d="M4 14 C9 14 13 11.500 15.500 6" fill="none" stroke="#111" stroke-width="1.600"/><path d="M12.500 6.500 L16.500 1.500 L19.500 7.500 Z" fill="#111"/><path d="M3 18 v-1.500 M6 18 v-2 M9 18 v-2.500 M12 18 v-3.500 M15 18 v-5" stroke="#2a6a9c" stroke-width="2"/></svg>
<svg style="left:1885px;top:1099.5px;" width="8" height="5" viewBox="0 0 8 5"><path d="M0.500 4.500 L4 0.500 L7.500 4.500 Z" fill="#9a9a9a"/></svg>
<svg style="left:1918px;top:1093px;" width="18" height="16" viewBox="0 0 18 16"><path d="M2 3.500 L7.500 1 L16.500 5 V9 L10 14.500 L1.500 10.500 Z" fill="#f2f2f2" stroke="#222" stroke-width="1.300" stroke-linejoin="round"/><path d="M1.500 8 L10 12 L16.500 6.500 M10 12 V14.500" fill="none" stroke="#222" stroke-width="1"/><circle cx="6" cy="4.700" r="1.900" fill="#f7f7f7" stroke="#222" stroke-width="1.100"/><path d="M9.500 7.500 L12 5.800" stroke="#222" stroke-width="1.600"/></svg>
<svg style="left:1946px;top:1098px;" width="10" height="10" viewBox="0 0 10 10"><g fill="#b0b0b0"><rect x="7" y="1" width="2" height="2"/><rect x="4" y="4" width="2" height="2"/><rect x="7" y="4" width="2" height="2"/><rect x="1" y="7" width="2" height="2"/><rect x="4" y="7" width="2" height="2"/><rect x="7" y="7" width="2" height="2"/></g></svg>
<svg style="left:302px;top:978px;" width="50" height="62" viewBox="0 0 50 62"><path d="M36 28 L40.500 27.500 L41 37 L37 38 Z" fill="#d81818"/><path d="M34.800 27.600 L38.500 27.300 L38.500 31.500 L35.500 31 Z" fill="#a80c0c"/>
<path d="M37.500 38.800 L19 48.800" stroke="#0000a8" stroke-width="3.800"/><path d="M12 53.300 L19.500 45.500 L23.800 52.300 Z" fill="#0000a8"/>
<path d="M37.800 38.200 L27.500 23" stroke="#0a5c10" stroke-width="3.800"/><path d="M23.200 16.200 L24.300 25.500 L31.300 21.300 Z" fill="#0a5c10"/><path d="M26.500 19.300 L30 21.600" stroke="#7ae08a" stroke-width="1.200"/><path d="M35.500 34.500 L37.500 37.500" stroke="#7ae08a" stroke-width="1"/>
<text x="20.300" y="9.800" font-size="8" fill="#0a8a1a" font-family="Liberation Sans, sans-serif" text-anchor="middle">Y</text>
<text x="37.300" y="23.800" font-size="8" fill="#f02020" font-family="Liberation Sans, sans-serif" text-anchor="middle">X</text>
<text x="7.300" y="55" font-size="8" fill="#1010ff" font-family="Liberation Sans, sans-serif" text-anchor="middle" font-weight="bold">Z</text></svg>
</body></html>
